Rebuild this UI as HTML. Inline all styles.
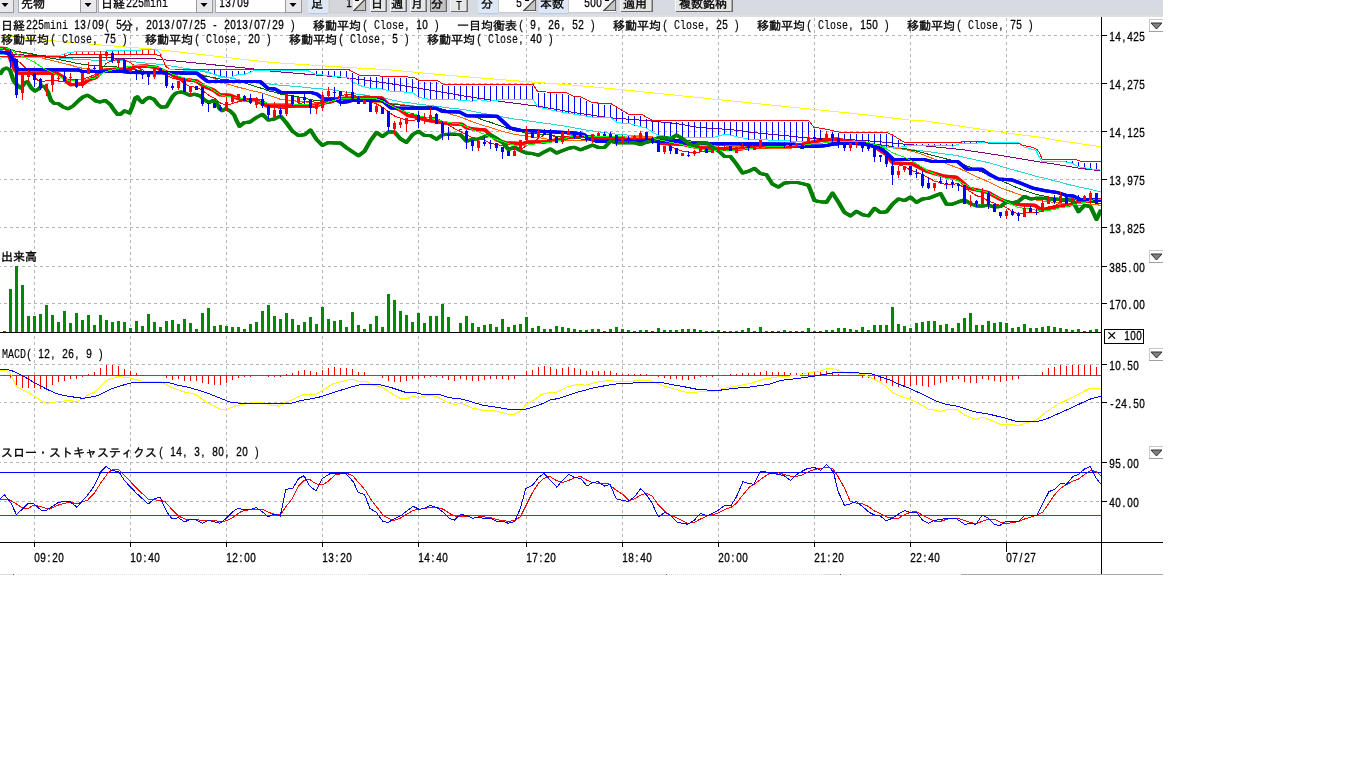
<!DOCTYPE html>
<html lang="ja"><head><meta charset="utf-8"><title>チャート</title>
<style>html,body{margin:0;padding:0;background:#fff;width:1366px;height:768px;overflow:hidden}
svg text{white-space:pre}</style></head>
<body>
<svg width="1366" height="768" viewBox="0 0 1366 768" shape-rendering="crispEdges" style="position:absolute;left:0;top:0;will-change:transform;transform:translateZ(0)">
<rect width="1366" height="768" fill="#fff"/>
<g stroke="#b4b4b4" stroke-width="1" stroke-dasharray="3 3" fill="none">
<line x1="34.5" y1="17" x2="34.5" y2="542" stroke-dashoffset="5"/>
<line x1="130.5" y1="17" x2="130.5" y2="542" stroke-dashoffset="5"/>
<line x1="226.5" y1="17" x2="226.5" y2="542" stroke-dashoffset="5"/>
<line x1="322.5" y1="17" x2="322.5" y2="542" stroke-dashoffset="5"/>
<line x1="418.5" y1="17" x2="418.5" y2="542" stroke-dashoffset="5"/>
<line x1="526.5" y1="17" x2="526.5" y2="542" stroke-dashoffset="5"/>
<line x1="622.5" y1="17" x2="622.5" y2="542" stroke-dashoffset="5"/>
<line x1="718.5" y1="17" x2="718.5" y2="542" stroke-dashoffset="5"/>
<line x1="814.5" y1="17" x2="814.5" y2="542" stroke-dashoffset="5"/>
<line x1="910.5" y1="17" x2="910.5" y2="542" stroke-dashoffset="5"/>
<line x1="1006.5" y1="17" x2="1006.5" y2="542" stroke-dashoffset="5"/>
<line x1="0" y1="35.5" x2="1101" y2="35.5" stroke-dashoffset="2"/>
<line x1="0" y1="83.5" x2="1101" y2="83.5" stroke-dashoffset="2"/>
<line x1="0" y1="131.5" x2="1101" y2="131.5" stroke-dashoffset="2"/>
<line x1="0" y1="179.5" x2="1101" y2="179.5" stroke-dashoffset="2"/>
<line x1="0" y1="227.5" x2="1101" y2="227.5" stroke-dashoffset="2"/>
<line x1="0" y1="266.5" x2="1101" y2="266.5" stroke-dashoffset="2"/>
<line x1="0" y1="303.5" x2="1101" y2="303.5" stroke-dashoffset="2"/>
<line x1="0" y1="364.5" x2="1101" y2="364.5" stroke-dashoffset="2"/>
<line x1="0" y1="402.5" x2="1101" y2="402.5" stroke-dashoffset="2"/>
<line x1="0" y1="462.5" x2="1101" y2="462.5" stroke-dashoffset="2"/>
<line x1="0" y1="501.5" x2="1101" y2="501.5" stroke-dashoffset="2"/>
</g>
<polyline points="0.0,54.1 4.5,54.1 10.5,54.1 16.5,54.9 22.5,55.3 28.5,55.6 34.5,56.0 40.5,56.7 46.5,57.2 52.5,57.6 58.5,58.0 64.5,58.4 70.5,58.8 76.5,59.4 82.5,59.7 88.5,59.9 94.5,60.2 100.5,60.1 106.5,60.0 112.5,60.1 118.5,60.4 124.5,61.0 130.5,61.5 136.5,62.1 142.5,62.7 148.5,63.4 154.5,63.9 160.5,64.4 166.5,65.3 172.5,66.3 178.5,67.1 184.5,68.2 190.5,69.1 196.5,70.1 202.5,71.5 208.5,72.9 214.5,74.4 220.5,75.9 226.5,77.3 232.5,78.4 238.5,79.6 244.5,81.0 250.5,82.0 256.5,82.1 262.5,82.9 268.5,83.9 274.5,84.6 280.5,85.3 286.5,85.6 292.5,86.3 298.5,86.8 304.5,87.2 310.5,88.0 316.5,88.5 322.5,89.0 328.5,89.6 334.5,90.2 340.5,91.3 346.5,92.3 352.5,93.3 358.5,94.4 364.5,95.0 370.5,96.1 376.5,96.9 382.5,97.9 388.5,99.1 394.5,100.5 400.5,101.8 406.5,102.6 412.5,103.2 418.5,104.2 424.5,104.8 430.5,105.6 436.5,106.4 442.5,107.1 448.5,107.9 454.5,108.6 460.5,109.1 466.5,110.1 472.5,111.4 478.5,112.6 484.5,113.6 490.5,114.6 496.5,115.9 502.5,117.0 508.5,118.0 514.5,119.1 520.5,119.7 526.5,120.6 532.5,121.5 538.5,122.3 544.5,123.2 550.5,123.9 556.5,124.9 562.5,125.8 568.5,126.8 574.5,127.9 580.5,128.9 586.5,130.1 592.5,131.0 598.5,131.7 604.5,132.6 610.5,133.3 616.5,134.2 622.5,134.8 628.5,135.1 634.5,135.5 640.5,135.8 646.5,136.3 652.5,137.1 658.5,137.8 664.5,138.5 670.5,139.4 676.5,140.2 682.5,140.7 688.5,141.2 694.5,141.6 700.5,142.0 706.5,142.3 712.5,142.4 718.5,142.5 724.5,142.6 730.5,142.8 736.5,142.8 742.5,142.6 748.5,142.4 754.5,142.3 760.5,142.3 766.5,142.7 772.5,142.9 778.5,143.2 784.5,143.5 790.5,143.7 796.5,143.6 802.5,144.1 808.5,144.2 814.5,144.3 820.5,144.4 826.5,144.2 832.5,144.3 838.5,144.6 844.5,144.9 850.5,145.0 856.5,145.0 862.5,145.3 868.5,145.5 874.5,146.0 880.5,146.6 886.5,147.2 892.5,148.0 898.5,148.5 904.5,149.0 910.5,149.6 916.5,150.1 922.5,150.9 928.5,151.7 934.5,152.5 940.5,153.4 946.5,154.2 952.5,155.0 958.5,156.0 964.5,157.4 970.5,158.7 976.5,160.1 982.5,161.3 988.5,162.7 994.5,164.3 1000.5,166.2 1006.5,167.9 1012.5,169.6 1018.5,171.3 1024.5,172.9 1030.5,174.6 1036.5,176.4 1042.5,177.7 1048.5,179.2 1054.5,180.8 1060.5,182.2 1066.5,184.0 1072.5,185.5 1078.5,186.9 1084.5,188.1 1090.5,189.3 1096.5,190.9 1102.5,192.3" fill="none" stroke="#2ad4d4" stroke-width="1" />
<polyline points="0.0,47.5 4.5,47.5 10.5,50.0 16.5,59.4 22.5,65.0 28.5,70.5 34.5,77.2 40.5,82.6 46.5,80.4 52.5,80.4 58.5,81.0 64.5,81.2 70.5,79.0 76.5,79.7 82.5,79.2 88.5,77.2 94.5,74.8 100.5,70.1 106.5,63.1 112.5,60.7 118.5,59.0 124.5,59.9 130.5,62.8 136.5,67.2 142.5,69.9 148.5,73.5 154.5,72.4 160.5,73.0 166.5,75.5 172.5,78.2 178.5,78.9 184.5,83.7 190.5,86.6 196.5,87.3 202.5,90.4 208.5,95.1 214.5,98.2 220.5,103.0 226.5,105.5 232.5,103.6 238.5,101.7 244.5,100.3 250.5,99.0 256.5,98.4 262.5,100.6 268.5,104.9 274.5,106.6 280.5,108.8 286.5,107.9 292.5,107.6 298.5,104.0 304.5,102.1 310.5,100.9 316.5,103.0 322.5,101.1 328.5,100.0 334.5,98.6 340.5,96.1 346.5,94.0 352.5,94.6 358.5,97.0 364.5,98.4 370.5,101.6 376.5,103.9 382.5,107.1 388.5,111.7 394.5,116.1 400.5,118.1 406.5,120.5 412.5,120.4 418.5,119.4 424.5,118.4 430.5,117.0 436.5,118.1 442.5,122.1 448.5,125.0 454.5,128.7 460.5,131.5 466.5,134.9 472.5,137.5 478.5,138.6 484.5,140.2 490.5,143.1 496.5,144.5 502.5,145.7 508.5,148.6 514.5,150.1 520.5,149.2 526.5,145.9 532.5,143.1 538.5,138.2 544.5,134.9 550.5,134.9 556.5,137.3 562.5,136.1 568.5,136.1 574.5,136.4 580.5,135.9 586.5,135.4 592.5,135.8 598.5,136.3 604.5,136.2 610.5,136.2 616.5,136.6 622.5,137.3 628.5,138.9 634.5,138.9 640.5,138.2 646.5,137.6 652.5,138.7 658.5,140.8 664.5,142.8 670.5,146.3 676.5,149.1 682.5,151.1 688.5,152.0 694.5,152.9 700.5,152.0 706.5,151.9 712.5,151.0 718.5,149.4 724.5,148.6 730.5,149.5 736.5,148.3 742.5,147.7 748.5,147.8 754.5,147.7 760.5,145.6 766.5,145.4 772.5,145.3 778.5,144.8 784.5,144.5 790.5,145.5 796.5,144.8 802.5,145.6 808.5,143.9 814.5,142.6 820.5,141.5 826.5,139.9 832.5,137.6 838.5,139.2 844.5,141.0 850.5,141.6 856.5,143.1 862.5,145.1 868.5,145.9 874.5,147.7 880.5,150.4 886.5,154.9 892.5,160.3 898.5,164.7 904.5,166.6 910.5,170.3 916.5,172.3 922.5,174.5 928.5,177.8 934.5,181.1 940.5,182.7 946.5,184.7 952.5,184.2 958.5,183.8 964.5,188.1 970.5,191.7 976.5,195.7 982.5,197.5 988.5,201.3 994.5,203.1 1000.5,206.0 1006.5,207.4 1012.5,211.9 1018.5,214.0 1024.5,213.2 1030.5,212.5 1036.5,212.9 1042.5,210.5 1048.5,207.0 1054.5,205.8 1060.5,202.5 1066.5,200.7 1072.5,199.7 1078.5,200.2 1084.5,198.9 1090.5,198.3 1096.5,198.4 1102.5,199.6" fill="none" stroke="#ff0000" stroke-width="1" />
<polyline points="0.0,48.7 4.5,48.7 10.5,49.3 16.5,51.5 22.5,52.8 28.5,54.1 34.5,55.6 40.5,57.6 46.5,59.3 52.5,60.6 58.5,62.0 64.5,63.6 70.5,65.0 76.5,67.0 82.5,68.2 88.5,69.2 94.5,70.2 100.5,70.4 106.5,70.7 112.5,71.3 118.5,71.9 124.5,73.3 130.5,73.6 136.5,72.6 142.5,72.6 148.5,72.7 154.5,72.1 160.5,71.2 166.5,71.4 172.5,72.0 178.5,72.1 184.5,72.7 190.5,73.1 196.5,73.3 202.5,74.8 208.5,76.6 214.5,78.6 220.5,81.4 226.5,83.9 232.5,85.5 238.5,87.3 244.5,88.7 250.5,90.4 256.5,91.7 262.5,93.2 268.5,95.1 274.5,97.2 280.5,99.4 286.5,99.8 292.5,100.6 298.5,101.4 304.5,101.8 310.5,102.9 316.5,103.7 322.5,103.2 328.5,102.6 334.5,101.9 340.5,101.2 346.5,100.8 352.5,101.0 358.5,101.5 364.5,101.4 370.5,101.9 376.5,102.2 382.5,102.6 388.5,103.2 394.5,103.8 400.5,104.2 406.5,105.4 412.5,105.8 418.5,107.0 424.5,107.9 430.5,108.2 436.5,109.1 442.5,111.0 448.5,113.3 454.5,115.4 460.5,117.1 466.5,119.4 472.5,121.8 478.5,123.7 484.5,125.8 490.5,127.4 496.5,129.5 502.5,131.4 508.5,132.9 514.5,134.3 520.5,135.2 526.5,135.9 532.5,137.1 538.5,137.6 544.5,138.5 550.5,139.7 556.5,140.7 562.5,140.6 568.5,140.4 574.5,140.4 580.5,140.8 586.5,140.8 592.5,140.2 598.5,139.8 604.5,139.4 610.5,139.1 616.5,138.8 622.5,138.1 628.5,137.4 634.5,136.6 640.5,136.3 646.5,136.7 652.5,137.0 658.5,138.0 664.5,138.6 670.5,139.2 676.5,139.7 682.5,140.7 688.5,142.0 694.5,142.7 700.5,143.2 706.5,143.8 712.5,144.5 718.5,145.3 724.5,145.8 730.5,146.5 736.5,146.7 742.5,147.1 748.5,147.5 754.5,148.0 760.5,148.4 766.5,148.7 772.5,148.8 778.5,148.5 784.5,148.4 790.5,148.2 796.5,147.6 802.5,147.4 808.5,146.5 814.5,145.8 820.5,145.5 826.5,144.6 832.5,144.1 838.5,143.9 844.5,143.9 850.5,143.6 856.5,143.3 862.5,143.4 868.5,143.4 874.5,143.9 880.5,144.8 886.5,145.7 892.5,147.2 898.5,148.4 904.5,149.5 910.5,150.9 916.5,152.5 922.5,154.4 928.5,156.9 934.5,159.1 940.5,161.2 946.5,163.7 952.5,166.0 958.5,168.1 964.5,170.9 970.5,173.8 976.5,176.9 982.5,179.1 988.5,181.9 994.5,184.7 1000.5,187.7 1006.5,190.0 1012.5,192.0 1018.5,194.2 1024.5,196.4 1030.5,198.2 1036.5,200.2 1042.5,201.0 1048.5,201.6 1054.5,202.5 1060.5,203.2 1066.5,204.2 1072.5,204.9 1078.5,205.6 1084.5,205.3 1090.5,204.8 1096.5,204.8 1102.5,205.4" fill="none" stroke="#ff6600" stroke-width="1" />
<polyline points="0.0,53.4 17.6,54.8 41.0,55.6 64.5,57.4 80.0,57.7 130.0,58.2 150.0,58.4 202.7,63.7 247.7,68.3 273.0,71.3 308.0,74.3 331.0,76.4 361.0,79.5 390.0,83.6 418.7,88.3 467.9,96.6 503.0,101.8 538.0,106.2 573.3,112.4 608.5,117.7 620.0,118.5 652.0,121.1 675.5,123.4 699.0,127.5 730.0,129.5 754.0,132.6 783.6,135.5 807.0,137.9 847.0,139.5 875.7,141.4 894.8,143.3 927.0,146.1 962.0,149.6 997.2,154.9 1032.4,160.8 1057.0,164.5 1080.3,168.4 1101.0,170.8" fill="none" stroke="#800080" stroke-width="1" />
<polyline points="0.0,35.5 25.8,38.4 55.7,41.0 80.0,43.3 130.0,47.3 150.0,48.8 220.3,56.7 270.0,62.4 290.6,63.7 343.3,67.2 390.0,69.9 450.3,75.5 526.0,81.6 573.3,85.1 620.0,89.5 824.3,110.5 866.0,114.8 909.0,120.0 920.0,120.3 1021.8,135.0 1040.0,137.1 1057.0,140.3 1101.0,146.7" fill="none" stroke="#ffff00" stroke-width="1" />
<polyline points="0.0,49.6 4.5,49.6 10.5,49.8 16.5,51.4 22.5,52.2 28.5,53.2 34.5,54.4 40.5,55.9 46.5,57.3 52.5,58.4 58.5,59.5 64.5,60.8 70.5,61.9 76.5,63.3 82.5,64.3 88.5,65.0 94.5,65.8 100.5,66.0 106.5,66.2 112.5,66.7 118.5,67.1 124.5,68.1 130.5,68.9 136.5,70.0 142.5,71.1 148.5,72.2 154.5,73.1 160.5,73.5 166.5,73.2 172.5,73.7 178.5,73.9 184.5,74.4 190.5,74.3 196.5,74.5 202.5,75.7 208.5,76.7 214.5,77.8 220.5,79.1 226.5,79.7 232.5,80.6 238.5,81.6 244.5,82.9 250.5,84.9 256.5,86.8 262.5,88.6 268.5,90.8 274.5,92.2 280.5,94.1 286.5,94.9 292.5,96.1 298.5,96.9 304.5,98.2 310.5,99.7 316.5,100.4 322.5,100.7 328.5,101.1 334.5,101.2 340.5,101.6 346.5,101.8 352.5,101.5 358.5,101.5 364.5,101.2 370.5,101.3 376.5,101.4 382.5,102.2 388.5,103.5 394.5,104.4 400.5,105.1 406.5,105.9 412.5,106.1 418.5,106.4 424.5,106.7 430.5,106.7 436.5,107.9 442.5,109.1 448.5,110.6 454.5,112.0 460.5,112.9 466.5,114.3 472.5,116.3 478.5,118.3 484.5,120.4 490.5,122.3 496.5,124.4 502.5,126.6 508.5,128.7 514.5,130.7 520.5,131.8 526.5,132.8 532.5,133.8 538.5,134.0 544.5,134.4 550.5,135.2 556.5,136.2 562.5,136.9 568.5,137.3 574.5,138.1 580.5,138.9 586.5,139.6 592.5,139.7 598.5,139.6 604.5,139.6 610.5,139.9 616.5,140.0 622.5,139.6 628.5,139.6 634.5,139.3 640.5,138.9 646.5,138.6 652.5,138.2 658.5,138.0 664.5,137.8 670.5,138.3 676.5,139.2 682.5,139.8 688.5,140.8 694.5,141.4 700.5,141.7 706.5,142.1 712.5,142.8 718.5,143.5 724.5,143.9 730.5,144.4 736.5,144.7 742.5,145.2 748.5,145.8 754.5,146.2 760.5,146.3 766.5,146.5 772.5,146.8 778.5,147.0 784.5,147.3 790.5,147.8 796.5,147.9 802.5,148.1 808.5,147.6 814.5,147.3 820.5,146.8 826.5,146.0 832.5,145.4 838.5,145.0 844.5,144.9 850.5,144.8 856.5,144.3 862.5,144.3 868.5,144.3 874.5,144.7 880.5,144.9 886.5,145.6 892.5,146.8 898.5,147.7 904.5,148.5 910.5,149.9 916.5,151.0 922.5,152.6 928.5,154.3 934.5,155.8 940.5,157.3 946.5,159.0 952.5,160.3 958.5,162.3 964.5,164.9 970.5,167.3 976.5,170.1 982.5,172.3 988.5,174.7 994.5,177.3 1000.5,180.2 1006.5,183.0 1012.5,185.7 1018.5,188.3 1024.5,190.4 1030.5,192.6 1036.5,194.6 1042.5,195.7 1048.5,196.8 1054.5,198.3 1060.5,199.1 1066.5,200.3 1072.5,200.8 1078.5,201.3 1084.5,201.8 1090.5,202.2 1096.5,203.0 1102.5,203.8" fill="none" stroke="#006400" stroke-width="1" />
<rect x="64" y="53.9" width="1" height="3.3" fill="#ff0000"/>
<rect x="70" y="52.3" width="1" height="2.7" fill="#ff0000"/>
<rect x="76" y="51.8" width="1" height="3.2" fill="#ff0000"/>
<rect x="82" y="51.4" width="1" height="3.6" fill="#ff0000"/>
<rect x="88" y="51.3" width="1" height="3.7" fill="#ff0000"/>
<rect x="94" y="51.2" width="1" height="3.8" fill="#ff0000"/>
<rect x="100" y="51.1" width="1" height="3.9" fill="#ff0000"/>
<rect x="106" y="51.0" width="1" height="4.0" fill="#ff0000"/>
<rect x="112" y="50.9" width="1" height="4.1" fill="#ff0000"/>
<rect x="118" y="50.8" width="1" height="4.2" fill="#ff0000"/>
<rect x="124" y="50.7" width="1" height="4.3" fill="#ff0000"/>
<rect x="130" y="50.6" width="1" height="4.4" fill="#ff0000"/>
<rect x="136" y="50.3" width="1" height="4.7" fill="#ff0000"/>
<rect x="142" y="49.9" width="1" height="5.1" fill="#ff0000"/>
<rect x="148" y="49.5" width="1" height="5.5" fill="#ff0000"/>
<rect x="154" y="49.5" width="1" height="5.6" fill="#ff0000"/>
<rect x="160" y="53.5" width="1" height="3.4" fill="#ff0000"/>
<rect x="208" y="70.4" width="1" height="2.1" fill="#0000ff"/>
<rect x="214" y="70.4" width="1" height="4.8" fill="#0000ff"/>
<rect x="220" y="70.4" width="1" height="7.0" fill="#0000ff"/>
<rect x="226" y="70.5" width="1" height="7.0" fill="#0000ff"/>
<rect x="232" y="70.5" width="1" height="6.8" fill="#0000ff"/>
<rect x="238" y="70.5" width="1" height="4.4" fill="#0000ff"/>
<rect x="244" y="70.5" width="1" height="4.4" fill="#0000ff"/>
<rect x="250" y="70.5" width="1" height="2.0" fill="#0000ff"/>
<rect x="310" y="70.7" width="1" height="1.7" fill="#0000ff"/>
<rect x="316" y="70.7" width="1" height="4.1" fill="#0000ff"/>
<rect x="322" y="70.7" width="1" height="4.8" fill="#0000ff"/>
<rect x="328" y="70.7" width="1" height="5.4" fill="#0000ff"/>
<rect x="334" y="70.8" width="1" height="6.0" fill="#0000ff"/>
<rect x="340" y="70.8" width="1" height="6.7" fill="#0000ff"/>
<rect x="346" y="70.8" width="1" height="7.3" fill="#0000ff"/>
<rect x="352" y="72.9" width="1" height="9.2" fill="#0000ff"/>
<rect x="358" y="76.1" width="1" height="9.4" fill="#0000ff"/>
<rect x="364" y="76.6" width="1" height="10.7" fill="#0000ff"/>
<rect x="370" y="76.9" width="1" height="11.9" fill="#0000ff"/>
<rect x="376" y="77.1" width="1" height="11.8" fill="#0000ff"/>
<rect x="382" y="77.4" width="1" height="12.2" fill="#0000ff"/>
<rect x="388" y="77.6" width="1" height="13.5" fill="#0000ff"/>
<rect x="394" y="77.8" width="1" height="14.0" fill="#0000ff"/>
<rect x="400" y="78.0" width="1" height="14.2" fill="#0000ff"/>
<rect x="406" y="78.3" width="1" height="14.5" fill="#0000ff"/>
<rect x="412" y="78.5" width="1" height="14.9" fill="#0000ff"/>
<rect x="418" y="81.4" width="1" height="16.4" fill="#0000ff"/>
<rect x="424" y="81.7" width="1" height="17.3" fill="#0000ff"/>
<rect x="430" y="81.8" width="1" height="18.2" fill="#0000ff"/>
<rect x="436" y="82.0" width="1" height="18.2" fill="#0000ff"/>
<rect x="442" y="85.1" width="1" height="15.2" fill="#0000ff"/>
<rect x="448" y="85.6" width="1" height="14.7" fill="#0000ff"/>
<rect x="454" y="85.6" width="1" height="14.8" fill="#0000ff"/>
<rect x="460" y="85.7" width="1" height="14.9" fill="#0000ff"/>
<rect x="466" y="85.7" width="1" height="15.3" fill="#0000ff"/>
<rect x="472" y="85.7" width="1" height="15.8" fill="#0000ff"/>
<rect x="478" y="85.7" width="1" height="14.4" fill="#0000ff"/>
<rect x="484" y="85.7" width="1" height="15.3" fill="#0000ff"/>
<rect x="490" y="85.8" width="1" height="15.8" fill="#0000ff"/>
<rect x="496" y="85.8" width="1" height="15.0" fill="#0000ff"/>
<rect x="502" y="85.8" width="1" height="14.2" fill="#0000ff"/>
<rect x="508" y="85.8" width="1" height="14.1" fill="#0000ff"/>
<rect x="514" y="85.8" width="1" height="14.1" fill="#0000ff"/>
<rect x="520" y="85.9" width="1" height="14.0" fill="#0000ff"/>
<rect x="526" y="85.9" width="1" height="14.0" fill="#0000ff"/>
<rect x="532" y="85.9" width="1" height="14.0" fill="#0000ff"/>
<rect x="538" y="93.1" width="1" height="14.5" fill="#0000ff"/>
<rect x="544" y="93.3" width="1" height="15.7" fill="#0000ff"/>
<rect x="550" y="93.4" width="1" height="16.9" fill="#0000ff"/>
<rect x="556" y="93.6" width="1" height="18.1" fill="#0000ff"/>
<rect x="562" y="93.7" width="1" height="19.0" fill="#0000ff"/>
<rect x="568" y="94.9" width="1" height="18.9" fill="#0000ff"/>
<rect x="574" y="97.4" width="1" height="17.4" fill="#0000ff"/>
<rect x="580" y="98.0" width="1" height="17.8" fill="#0000ff"/>
<rect x="586" y="101.0" width="1" height="15.7" fill="#0000ff"/>
<rect x="592" y="104.1" width="1" height="13.4" fill="#0000ff"/>
<rect x="598" y="104.3" width="1" height="13.3" fill="#0000ff"/>
<rect x="604" y="104.5" width="1" height="13.2" fill="#0000ff"/>
<rect x="610" y="104.7" width="1" height="13.4" fill="#0000ff"/>
<rect x="616" y="108.3" width="1" height="14.1" fill="#0000ff"/>
<rect x="622" y="111.9" width="1" height="11.9" fill="#0000ff"/>
<rect x="628" y="115.5" width="1" height="8.4" fill="#0000ff"/>
<rect x="634" y="115.9" width="1" height="9.6" fill="#0000ff"/>
<rect x="640" y="116.2" width="1" height="10.9" fill="#0000ff"/>
<rect x="646" y="118.5" width="1" height="10.3" fill="#0000ff"/>
<rect x="652" y="121.6" width="1" height="10.9" fill="#0000ff"/>
<rect x="658" y="121.6" width="1" height="14.2" fill="#0000ff"/>
<rect x="664" y="121.6" width="1" height="15.0" fill="#0000ff"/>
<rect x="670" y="121.6" width="1" height="15.8" fill="#0000ff"/>
<rect x="676" y="121.6" width="1" height="16.4" fill="#0000ff"/>
<rect x="682" y="121.6" width="1" height="16.4" fill="#0000ff"/>
<rect x="688" y="121.6" width="1" height="16.4" fill="#0000ff"/>
<rect x="694" y="121.6" width="1" height="16.4" fill="#0000ff"/>
<rect x="700" y="121.6" width="1" height="16.4" fill="#0000ff"/>
<rect x="706" y="121.6" width="1" height="16.4" fill="#0000ff"/>
<rect x="712" y="121.6" width="1" height="16.4" fill="#0000ff"/>
<rect x="718" y="121.6" width="1" height="14.9" fill="#0000ff"/>
<rect x="724" y="121.6" width="1" height="13.6" fill="#0000ff"/>
<rect x="730" y="121.5" width="1" height="14.1" fill="#0000ff"/>
<rect x="736" y="121.5" width="1" height="15.6" fill="#0000ff"/>
<rect x="742" y="121.5" width="1" height="16.8" fill="#0000ff"/>
<rect x="748" y="121.5" width="1" height="18.0" fill="#0000ff"/>
<rect x="754" y="121.5" width="1" height="18.3" fill="#0000ff"/>
<rect x="760" y="121.5" width="1" height="18.6" fill="#0000ff"/>
<rect x="766" y="121.5" width="1" height="18.9" fill="#0000ff"/>
<rect x="772" y="121.5" width="1" height="19.2" fill="#0000ff"/>
<rect x="778" y="121.5" width="1" height="19.5" fill="#0000ff"/>
<rect x="784" y="121.5" width="1" height="19.7" fill="#0000ff"/>
<rect x="790" y="121.5" width="1" height="20.0" fill="#0000ff"/>
<rect x="796" y="121.5" width="1" height="20.1" fill="#0000ff"/>
<rect x="802" y="121.5" width="1" height="20.3" fill="#0000ff"/>
<rect x="808" y="121.5" width="1" height="20.4" fill="#0000ff"/>
<rect x="814" y="128.5" width="1" height="13.6" fill="#0000ff"/>
<rect x="820" y="129.5" width="1" height="12.7" fill="#0000ff"/>
<rect x="826" y="130.5" width="1" height="11.8" fill="#0000ff"/>
<rect x="832" y="131.9" width="1" height="10.9" fill="#0000ff"/>
<rect x="838" y="133.3" width="1" height="9.9" fill="#0000ff"/>
<rect x="844" y="134.2" width="1" height="9.4" fill="#0000ff"/>
<rect x="850" y="134.2" width="1" height="9.9" fill="#0000ff"/>
<rect x="856" y="134.2" width="1" height="10.5" fill="#0000ff"/>
<rect x="862" y="134.2" width="1" height="11.1" fill="#0000ff"/>
<rect x="868" y="134.3" width="1" height="11.7" fill="#0000ff"/>
<rect x="874" y="134.3" width="1" height="12.3" fill="#0000ff"/>
<rect x="880" y="134.3" width="1" height="12.9" fill="#0000ff"/>
<rect x="886" y="134.3" width="1" height="13.4" fill="#0000ff"/>
<rect x="892" y="136.3" width="1" height="11.7" fill="#0000ff"/>
<rect x="898" y="140.0" width="1" height="7.7" fill="#0000ff"/>
<rect x="904" y="143.7" width="1" height="3.4" fill="#0000ff"/>
<rect x="910" y="143.7" width="1" height="2.0" fill="#0000ff"/>
<rect x="916" y="143.7" width="1" height="2.0" fill="#0000ff"/>
<rect x="922" y="143.7" width="1" height="2.1" fill="#0000ff"/>
<rect x="928" y="143.7" width="1" height="2.1" fill="#0000ff"/>
<rect x="934" y="143.7" width="1" height="2.2" fill="#0000ff"/>
<rect x="940" y="143.7" width="1" height="2.2" fill="#0000ff"/>
<rect x="946" y="143.7" width="1" height="2.3" fill="#0000ff"/>
<rect x="952" y="143.7" width="1" height="2.8" fill="#0000ff"/>
<rect x="964" y="142.4" width="1" height="1.3" fill="#0000ff"/>
<rect x="970" y="142.4" width="1" height="1.3" fill="#0000ff"/>
<rect x="976" y="142.4" width="1" height="1.3" fill="#0000ff"/>
<rect x="1036" y="150.7" width="1" height="1.4" fill="#0000ff"/>
<rect x="1066" y="160.8" width="1" height="1.7" fill="#0000ff"/>
<rect x="1072" y="160.9" width="1" height="3.0" fill="#0000ff"/>
<rect x="1078" y="161.8" width="1" height="5.5" fill="#0000ff"/>
<rect x="1084" y="162.7" width="1" height="5.5" fill="#0000ff"/>
<rect x="1090" y="162.8" width="1" height="6.4" fill="#0000ff"/>
<rect x="1096" y="162.9" width="1" height="7.2" fill="#0000ff"/>
<polyline points="0.0,58.3 3.0,57.4 41.0,57.4 48.7,55.6 61.5,55.0 66.0,53.3 69.2,52.4 82.0,51.4 131.8,50.6 153.7,49.2 158.0,51.0 161.0,54.0 165.4,65.3 169.0,68.6 172.0,69.8 200.0,70.3 207.0,71.3 214.0,74.5 220.6,77.0 232.0,77.0 238.0,74.4 244.6,74.4 253.7,70.8 308.0,70.8 316.0,74.3 348.6,77.8 352.0,81.3 359.0,85.3 369.7,88.3 380.0,88.5 390.0,91.0 406.4,92.2 413.4,93.0 418.7,97.5 431.0,99.6 464.4,100.1 471.4,101.3 478.4,99.6 489.0,101.3 503.0,99.4 533.0,99.4 538.0,107.0 555.7,111.0 573.3,114.1 591.0,117.0 610.2,117.3 617.0,122.3 622.8,123.4 628.6,123.4 646.2,128.1 652.0,131.7 658.0,135.2 675.5,137.5 713.0,137.5 723.6,134.6 730.0,135.0 736.7,136.7 748.4,139.0 772.0,140.2 790.0,141.0 828.0,141.9 847.0,143.3 866.0,145.2 885.0,147.1 894.8,147.6 904.3,146.7 910.0,145.2 950.3,145.5 952.7,146.1 962.0,143.2 977.3,143.2 980.8,142.3 1018.3,142.3 1024.0,147.0 1035.8,150.2 1041.6,161.4 1062.8,161.4 1072.0,163.1 1078.0,166.7 1092.0,169.0 1101.0,170.2" fill="none" stroke="#00ffff" stroke-width="1" />
<polyline points="0.0,56.5 64.5,56.7 65.7,55.8 69.2,54.5 80.0,54.5 153.7,54.5 159.6,55.3 162.3,58.5 165.8,66.4 169.3,69.0 348.6,69.5 359.0,75.1 380.0,76.0 413.4,77.2 418.7,80.2 438.0,80.8 443.3,84.3 533.0,84.6 538.0,91.8 566.3,92.5 573.3,96.0 580.4,96.6 592.7,102.9 610.4,103.3 628.6,114.3 642.7,115.0 652.0,120.3 808.6,120.2 813.8,127.1 828.0,129.5 842.4,132.9 888.0,133.0 892.9,135.2 904.3,142.4 961.0,142.4 962.0,141.1 983.0,141.1 988.0,143.0 1018.3,143.0 1023.0,145.5 1032.4,147.3 1037.0,149.6 1039.3,152.6 1042.2,159.4 1075.6,159.6 1081.5,161.4 1101.0,161.7" fill="none" stroke="#ff0000" stroke-width="1" />
<polyline points="-0.7,48.3 5.3,48.5 7.8,52.0 9.8,59.0 12.8,67.0 15.3,71.5 18.3,73.3 56.3,73.3 63.8,78.0 66.0,81.7 70.1,84.8 82.3,83.8 88.9,79.6 95.1,77.5 99.3,73.3 103.3,70.2 113.9,69.2 124.3,69.7 130.3,68.6 134.3,66.6 144.9,66.0 156.3,67.6 160.6,70.2 163.7,71.2 171.0,74.4 177.3,78.5 196.0,81.0 202.3,85.8 212.6,90.0 218.9,94.7 229.3,95.2 233.5,96.8 239.7,99.4 254.3,100.4 259.3,102.5 266.3,106.0 315.3,106.0 322.6,103.0 329.3,102.0 339.0,98.4 353.1,97.9 364.8,97.3 381.3,97.9 387.1,104.3 400.0,110.2 407.0,115.4 414.3,116.7 426.0,120.2 437.7,121.9 449.3,123.7 461.3,124.3 465.9,127.8 472.9,129.0 484.6,130.1 489.3,134.8 496.3,140.1 505.7,143.0 522.2,143.6 526.8,141.9 543.3,141.9 555.0,140.1 566.7,137.8 574.3,136.8 583.3,136.3 592.7,137.5 616.3,138.1 651.3,139.3 660.7,143.4 674.8,144.0 683.3,144.5 689.3,146.0 697.3,147.5 724.3,148.7 736.0,149.4 747.7,147.8 759.3,146.7 794.3,146.0 806.3,143.1 818.1,140.8 829.8,139.6 836.8,139.0 846.3,141.4 865.0,143.7 874.3,146.7 879.3,150.2 885.3,154.3 892.3,163.1 910.9,163.7 926.3,171.3 942.6,176.0 955.5,177.2 961.3,181.9 968.3,188.3 987.2,192.4 997.7,198.3 1005.9,201.8 1020.0,204.8 1034.0,205.3 1040.9,210.0 1048.0,208.3 1056.3,206.5 1067.9,205.3 1074.9,202.4 1091.3,200.6 1100.3,199.5" fill="none" stroke="#ff0000" stroke-width="3" stroke-linejoin="round" shape-rendering="geometricPrecision"/>
<polyline points="0.7,48.3 6.7,48.5 9.2,52.0 11.2,59.0 14.2,67.0 16.7,71.5 19.7,73.3 57.7,73.3 65.2,78.0 67.4,81.7 71.5,84.8 83.7,83.8 90.3,79.6 96.5,77.5 100.7,73.3 104.7,70.2 115.3,69.2 125.7,69.7 131.7,68.6 135.7,66.6 146.3,66.0 157.7,67.6 161.9,70.2 165.1,71.2 172.4,74.4 178.7,78.5 197.4,81.0 203.7,85.8 214.0,90.0 220.3,94.7 230.7,95.2 234.9,96.8 241.1,99.4 255.7,100.4 260.7,102.5 267.7,106.0 316.7,106.0 324.0,103.0 330.7,102.0 340.4,98.4 354.5,97.9 366.2,97.3 382.7,97.9 388.5,104.3 401.4,110.2 408.4,115.4 415.7,116.7 427.4,120.2 439.1,121.9 450.7,123.7 462.7,124.3 467.3,127.8 474.3,129.0 486.0,130.1 490.7,134.8 497.7,140.1 507.1,143.0 523.6,143.6 528.2,141.9 544.7,141.9 556.4,140.1 568.1,137.8 575.7,136.8 584.7,136.3 594.1,137.5 617.7,138.1 652.7,139.3 662.1,143.4 676.2,144.0 684.7,144.5 690.7,146.0 698.7,147.5 725.7,148.7 737.4,149.4 749.1,147.8 760.7,146.7 795.7,146.0 807.7,143.1 819.5,140.8 831.2,139.6 838.2,139.0 847.7,141.4 866.4,143.7 875.7,146.7 880.7,150.2 886.7,154.3 893.7,163.1 912.3,163.7 927.7,171.3 944.0,176.0 956.9,177.2 962.7,181.9 969.7,188.3 988.6,192.4 999.1,198.3 1007.3,201.8 1021.4,204.8 1035.5,205.3 1042.3,210.0 1049.4,208.3 1057.7,206.5 1069.3,205.3 1076.3,202.4 1092.7,200.6 1101.7,199.5" fill="none" stroke="#ff0000" stroke-width="3" stroke-linejoin="round" shape-rendering="geometricPrecision"/>
<polyline points="0.0,48.3 6.0,48.5 8.5,52.0 10.5,59.0 13.5,67.0 16.0,71.5 19.0,73.3 57.0,73.3 64.5,78.0 66.7,81.7 70.8,84.8 83.0,83.8 89.6,79.6 95.8,77.5 100.0,73.3 104.0,70.2 114.6,69.2 125.0,69.7 131.0,68.6 135.0,66.6 145.6,66.0 157.0,67.6 161.2,70.2 164.4,71.2 171.7,74.4 178.0,78.5 196.7,81.0 203.0,85.8 213.3,90.0 219.6,94.7 230.0,95.2 234.2,96.8 240.4,99.4 255.0,100.4 260.0,102.5 267.0,106.0 316.0,106.0 323.3,103.0 330.0,102.0 339.7,98.4 353.8,97.9 365.5,97.3 382.0,97.9 387.8,104.3 400.7,110.2 407.7,115.4 415.0,116.7 426.7,120.2 438.4,121.9 450.0,123.7 462.0,124.3 466.6,127.8 473.6,129.0 485.3,130.1 490.0,134.8 497.0,140.1 506.4,143.0 522.9,143.6 527.5,141.9 544.0,141.9 555.7,140.1 567.4,137.8 575.0,136.8 584.0,136.3 593.4,137.5 617.0,138.1 652.0,139.3 661.4,143.4 675.5,144.0 684.0,144.5 690.0,146.0 698.0,147.5 725.0,148.7 736.7,149.4 748.4,147.8 760.0,146.7 795.0,146.0 807.0,143.1 818.8,140.8 830.5,139.6 837.5,139.0 847.0,141.4 865.7,143.7 875.0,146.7 880.0,150.2 886.0,154.3 893.0,163.1 911.6,163.7 927.0,171.3 943.3,176.0 956.2,177.2 962.0,181.9 969.0,188.3 987.9,192.4 998.4,198.3 1006.6,201.8 1020.7,204.8 1034.8,205.3 1041.6,210.0 1048.7,208.3 1057.0,206.5 1068.6,205.3 1075.6,202.4 1092.0,200.6 1101.0,199.5" fill="none" stroke="#ff0000" stroke-width="3" stroke-linejoin="round" shape-rendering="geometricPrecision"/>
<polyline points="-0.7,52.0 8.1,53.2 11.0,57.4 14.5,62.6 16.3,69.5 78.3,70.0 81.3,71.5 124.3,71.5 129.3,72.5 196.0,73.0 206.3,81.2 259.3,81.5 262.3,84.0 267.3,88.5 274.3,89.0 280.3,92.6 310.9,92.6 316.7,94.3 322.6,99.0 334.3,99.0 340.3,102.5 348.3,101.4 353.1,99.8 381.3,100.2 384.7,103.0 390.6,108.0 435.3,108.2 442.3,111.6 458.8,112.0 465.9,115.8 496.3,116.2 509.3,128.0 519.8,130.2 574.3,133.0 583.3,134.6 588.1,138.7 596.3,141.4 679.3,140.8 686.3,143.5 794.3,144.2 801.3,146.4 821.3,146.0 827.3,145.2 836.8,142.5 842.7,143.1 862.3,143.7 872.0,146.0 879.3,148.0 885.3,152.6 892.3,159.4 922.7,159.4 930.9,161.4 956.7,161.4 966.0,169.0 981.3,169.2 989.5,174.9 997.7,179.0 1011.8,180.1 1021.0,183.7 1032.7,188.3 1044.5,190.7 1056.3,192.4 1065.6,195.4 1072.6,196.0 1079.6,199.5 1089.0,199.5 1100.3,200.6" fill="none" stroke="#0000ff" stroke-width="3" stroke-linejoin="round" shape-rendering="geometricPrecision"/>
<polyline points="0.7,52.0 9.5,53.2 12.4,57.4 15.9,62.6 17.7,69.5 79.7,70.0 82.7,71.5 125.7,71.5 130.7,72.5 197.4,73.0 207.7,81.2 260.7,81.5 263.7,84.0 268.7,88.5 275.7,89.0 281.7,92.6 312.3,92.6 318.1,94.3 324.0,99.0 335.7,99.0 341.7,102.5 349.7,101.4 354.5,99.8 382.7,100.2 386.1,103.0 392.0,108.0 436.7,108.2 443.7,111.6 460.2,112.0 467.3,115.8 497.7,116.2 510.7,128.0 521.2,130.2 575.7,133.0 584.7,134.6 589.5,138.7 597.7,141.4 680.7,140.8 687.7,143.5 795.7,144.2 802.7,146.4 822.7,146.0 828.7,145.2 838.2,142.5 844.1,143.1 863.7,143.7 873.4,146.0 880.7,148.0 886.7,152.6 893.7,159.4 924.1,159.4 932.3,161.4 958.1,161.4 967.5,169.0 982.7,169.2 990.9,174.9 999.1,179.0 1013.2,180.1 1022.4,183.7 1034.1,188.3 1045.9,190.7 1057.7,192.4 1067.0,195.4 1074.0,196.0 1081.0,199.5 1090.4,199.5 1101.7,200.6" fill="none" stroke="#0000ff" stroke-width="3" stroke-linejoin="round" shape-rendering="geometricPrecision"/>
<polyline points="0.0,52.0 8.8,53.2 11.7,57.4 15.2,62.6 17.0,69.5 79.0,70.0 82.0,71.5 125.0,71.5 130.0,72.5 196.7,73.0 207.0,81.2 260.0,81.5 263.0,84.0 268.0,88.5 275.0,89.0 281.0,92.6 311.6,92.6 317.4,94.3 323.3,99.0 335.0,99.0 341.0,102.5 349.0,101.4 353.8,99.8 382.0,100.2 385.4,103.0 391.3,108.0 436.0,108.2 443.0,111.6 459.5,112.0 466.6,115.8 497.0,116.2 510.0,128.0 520.5,130.2 575.0,133.0 584.0,134.6 588.8,138.7 597.0,141.4 680.0,140.8 687.0,143.5 795.0,144.2 802.0,146.4 822.0,146.0 828.0,145.2 837.5,142.5 843.4,143.1 863.0,143.7 872.7,146.0 880.0,148.0 886.0,152.6 893.0,159.4 923.4,159.4 931.6,161.4 957.4,161.4 966.8,169.0 982.0,169.2 990.2,174.9 998.4,179.0 1012.5,180.1 1021.7,183.7 1033.4,188.3 1045.2,190.7 1057.0,192.4 1066.3,195.4 1073.3,196.0 1080.3,199.5 1089.7,199.5 1101.0,200.6" fill="none" stroke="#0000ff" stroke-width="3" stroke-linejoin="round" shape-rendering="geometricPrecision"/>
<polyline points="-0.7,74.4 2.3,69.7 5.6,68.0 9.3,70.0 12.8,80.6 16.0,84.8 20.1,88.0 24.3,82.7 26.9,81.7 30.6,88.0 34.3,91.0 37.8,89.0 41.0,85.8 44.1,86.9 47.3,92.0 50.3,100.4 53.5,103.5 57.6,103.5 62.8,107.2 67.5,108.8 72.3,106.0 78.5,100.0 82.6,96.8 86.8,95.2 91.0,97.8 95.1,101.0 99.3,102.0 104.5,100.4 109.7,104.6 113.9,110.8 117.0,114.5 120.1,114.0 123.8,110.8 129.0,113.0 131.6,106.7 134.7,97.8 136.8,96.8 138.7,99.9 141.8,102.5 144.9,99.4 148.6,97.3 153.3,99.4 157.3,104.6 160.6,107.2 165.8,106.7 168.9,101.5 172.0,96.2 175.1,93.1 180.3,92.0 184.5,93.1 188.7,95.2 193.9,94.2 199.1,95.7 204.3,100.4 208.5,102.5 212.6,100.4 215.8,102.5 218.9,108.8 221.5,110.8 225.1,108.8 229.3,110.8 233.5,115.0 235.6,120.0 238.8,126.3 243.3,122.8 249.3,121.9 255.3,117.8 261.8,114.3 267.8,120.1 273.8,119.0 279.8,116.0 285.8,123.0 291.8,131.3 297.8,135.4 303.8,134.8 309.8,130.0 315.8,139.5 321.8,145.3 327.8,142.4 333.8,143.0 339.8,143.0 345.8,147.7 351.8,151.8 357.8,155.7 363.8,151.2 369.8,140.6 375.8,132.4 381.8,136.5 387.8,131.9 393.8,131.9 399.8,138.9 405.8,142.4 411.8,134.8 417.8,131.3 423.8,135.4 429.8,135.6 435.8,139.2 441.8,134.8 447.8,134.2 453.8,134.2 459.8,134.8 465.8,141.3 471.8,139.2 477.8,138.9 483.8,136.6 489.8,134.8 495.8,138.3 501.8,142.4 507.8,149.5 513.8,147.1 519.8,150.6 525.8,153.0 531.8,153.6 537.8,155.3 543.8,151.8 549.8,148.9 555.8,153.0 561.8,150.6 567.8,148.3 573.8,147.3 579.8,149.8 585.8,147.5 591.8,145.1 597.8,147.5 603.8,147.5 609.8,141.0 615.8,142.8 621.8,142.8 627.8,142.8 633.8,142.8 639.8,144.5 645.8,142.2 651.8,141.0 657.8,137.5 663.8,137.5 669.8,138.7 675.8,135.0 681.8,138.7 687.8,143.4 693.8,146.3 699.8,142.8 705.8,142.8 711.8,146.9 717.8,151.0 723.8,156.3 729.8,156.5 735.8,164.2 741.8,173.0 747.8,171.3 753.8,168.3 759.8,173.6 765.8,174.8 771.8,184.2 777.8,187.1 783.8,183.0 789.8,182.4 795.8,182.4 801.8,183.6 807.8,185.3 813.8,200.6 819.8,201.8 825.8,202.3 831.8,193.0 837.8,202.3 843.8,212.4 849.8,215.9 855.8,211.2 861.8,214.7 867.8,215.9 873.8,208.3 879.8,212.4 885.8,211.8 891.8,204.2 897.8,198.9 903.8,200.6 909.8,197.1 915.8,202.4 921.8,198.9 927.8,198.3 933.8,196.0 939.8,193.6 945.8,204.2 951.8,204.2 957.8,201.8 963.8,200.0 969.8,203.6 975.8,205.9 981.8,205.9 987.8,205.3 993.8,207.1 999.8,206.5 1005.8,201.8 1011.8,203.0 1017.8,201.2 1023.8,196.5 1029.8,198.9 1035.8,198.3 1041.8,198.3 1047.8,198.9 1053.8,198.9 1059.8,199.5 1065.8,199.5 1071.8,200.6 1077.8,211.8 1083.8,205.3 1089.8,206.7 1095.8,219.4 1100.3,210.0" fill="none" stroke="#008000" stroke-width="3" stroke-linejoin="round" shape-rendering="geometricPrecision"/>
<polyline points="0.7,74.4 3.7,69.7 7.0,68.0 10.7,70.0 14.2,80.6 17.4,84.8 21.5,88.0 25.7,82.7 28.3,81.7 32.0,88.0 35.7,91.0 39.2,89.0 42.4,85.8 45.5,86.9 48.7,92.0 51.7,100.4 54.9,103.5 59.0,103.5 64.2,107.2 68.9,108.8 73.7,106.0 79.9,100.0 84.0,96.8 88.2,95.2 92.4,97.8 96.5,101.0 100.7,102.0 105.9,100.4 111.1,104.6 115.3,110.8 118.4,114.5 121.5,114.0 125.2,110.8 130.4,113.0 133.0,106.7 136.1,97.8 138.2,96.8 140.1,99.9 143.2,102.5 146.3,99.4 150.0,97.3 154.7,99.4 158.7,104.6 161.9,107.2 167.2,106.7 170.3,101.5 173.4,96.2 176.5,93.1 181.7,92.0 185.9,93.1 190.1,95.2 195.3,94.2 200.5,95.7 205.7,100.4 209.9,102.5 214.0,100.4 217.2,102.5 220.3,108.8 222.9,110.8 226.5,108.8 230.7,110.8 234.9,115.0 236.9,120.0 240.2,126.3 244.7,122.8 250.7,121.9 256.7,117.8 263.2,114.3 269.2,120.1 275.2,119.0 281.2,116.0 287.2,123.0 293.2,131.3 299.2,135.4 305.2,134.8 311.2,130.0 317.2,139.5 323.2,145.3 329.2,142.4 335.2,143.0 341.2,143.0 347.2,147.7 353.2,151.8 359.2,155.7 365.2,151.2 371.2,140.6 377.2,132.4 383.2,136.5 389.2,131.9 395.2,131.9 401.2,138.9 407.2,142.4 413.2,134.8 419.2,131.3 425.2,135.4 431.2,135.6 437.2,139.2 443.2,134.8 449.2,134.2 455.2,134.2 461.2,134.8 467.2,141.3 473.2,139.2 479.2,138.9 485.2,136.6 491.2,134.8 497.2,138.3 503.2,142.4 509.2,149.5 515.2,147.1 521.2,150.6 527.2,153.0 533.2,153.6 539.2,155.3 545.2,151.8 551.2,148.9 557.2,153.0 563.2,150.6 569.2,148.3 575.2,147.3 581.2,149.8 587.2,147.5 593.2,145.1 599.2,147.5 605.2,147.5 611.2,141.0 617.2,142.8 623.2,142.8 629.2,142.8 635.2,142.8 641.2,144.5 647.2,142.2 653.2,141.0 659.2,137.5 665.2,137.5 671.2,138.7 677.2,135.0 683.2,138.7 689.2,143.4 695.2,146.3 701.2,142.8 707.2,142.8 713.2,146.9 719.2,151.0 725.2,156.3 731.2,156.5 737.2,164.2 743.2,173.0 749.2,171.3 755.2,168.3 761.2,173.6 767.2,174.8 773.2,184.2 779.2,187.1 785.2,183.0 791.2,182.4 797.2,182.4 803.2,183.6 809.2,185.3 815.2,200.6 821.2,201.8 827.2,202.3 833.2,193.0 839.2,202.3 845.2,212.4 851.2,215.9 857.2,211.2 863.2,214.7 869.2,215.9 875.2,208.3 881.2,212.4 887.2,211.8 893.2,204.2 899.2,198.9 905.2,200.6 911.2,197.1 917.2,202.4 923.2,198.9 929.2,198.3 935.2,196.0 941.2,193.6 947.2,204.2 953.2,204.2 959.2,201.8 965.2,200.0 971.2,203.6 977.2,205.9 983.2,205.9 989.2,205.3 995.2,207.1 1001.2,206.5 1007.2,201.8 1013.2,203.0 1019.2,201.2 1025.2,196.5 1031.2,198.9 1037.2,198.3 1043.2,198.3 1049.2,198.9 1055.2,198.9 1061.2,199.5 1067.2,199.5 1073.2,200.6 1079.2,211.8 1085.2,205.3 1091.2,206.7 1097.2,219.4 1101.7,210.0" fill="none" stroke="#008000" stroke-width="3" stroke-linejoin="round" shape-rendering="geometricPrecision"/>
<polyline points="0.0,74.4 3.0,69.7 6.3,68.0 10.0,70.0 13.5,80.6 16.7,84.8 20.8,88.0 25.0,82.7 27.6,81.7 31.3,88.0 35.0,91.0 38.5,89.0 41.7,85.8 44.8,86.9 48.0,92.0 51.0,100.4 54.2,103.5 58.3,103.5 63.5,107.2 68.2,108.8 73.0,106.0 79.2,100.0 83.3,96.8 87.5,95.2 91.7,97.8 95.8,101.0 100.0,102.0 105.2,100.4 110.4,104.6 114.6,110.8 117.7,114.5 120.8,114.0 124.5,110.8 129.7,113.0 132.3,106.7 135.4,97.8 137.5,96.8 139.4,99.9 142.5,102.5 145.6,99.4 149.3,97.3 154.0,99.4 158.0,104.6 161.2,107.2 166.5,106.7 169.6,101.5 172.7,96.2 175.8,93.1 181.0,92.0 185.2,93.1 189.4,95.2 194.6,94.2 199.8,95.7 205.0,100.4 209.2,102.5 213.3,100.4 216.5,102.5 219.6,108.8 222.2,110.8 225.8,108.8 230.0,110.8 234.2,115.0 236.2,120.0 239.5,126.3 244.0,122.8 250.0,121.9 256.0,117.8 262.5,114.3 268.5,120.1 274.5,119.0 280.5,116.0 286.5,123.0 292.5,131.3 298.5,135.4 304.5,134.8 310.5,130.0 316.5,139.5 322.5,145.3 328.5,142.4 334.5,143.0 340.5,143.0 346.5,147.7 352.5,151.8 358.5,155.7 364.5,151.2 370.5,140.6 376.5,132.4 382.5,136.5 388.5,131.9 394.5,131.9 400.5,138.9 406.5,142.4 412.5,134.8 418.5,131.3 424.5,135.4 430.5,135.6 436.5,139.2 442.5,134.8 448.5,134.2 454.5,134.2 460.5,134.8 466.5,141.3 472.5,139.2 478.5,138.9 484.5,136.6 490.5,134.8 496.5,138.3 502.5,142.4 508.5,149.5 514.5,147.1 520.5,150.6 526.5,153.0 532.5,153.6 538.5,155.3 544.5,151.8 550.5,148.9 556.5,153.0 562.5,150.6 568.5,148.3 574.5,147.3 580.5,149.8 586.5,147.5 592.5,145.1 598.5,147.5 604.5,147.5 610.5,141.0 616.5,142.8 622.5,142.8 628.5,142.8 634.5,142.8 640.5,144.5 646.5,142.2 652.5,141.0 658.5,137.5 664.5,137.5 670.5,138.7 676.5,135.0 682.5,138.7 688.5,143.4 694.5,146.3 700.5,142.8 706.5,142.8 712.5,146.9 718.5,151.0 724.5,156.3 730.5,156.5 736.5,164.2 742.5,173.0 748.5,171.3 754.5,168.3 760.5,173.6 766.5,174.8 772.5,184.2 778.5,187.1 784.5,183.0 790.5,182.4 796.5,182.4 802.5,183.6 808.5,185.3 814.5,200.6 820.5,201.8 826.5,202.3 832.5,193.0 838.5,202.3 844.5,212.4 850.5,215.9 856.5,211.2 862.5,214.7 868.5,215.9 874.5,208.3 880.5,212.4 886.5,211.8 892.5,204.2 898.5,198.9 904.5,200.6 910.5,197.1 916.5,202.4 922.5,198.9 928.5,198.3 934.5,196.0 940.5,193.6 946.5,204.2 952.5,204.2 958.5,201.8 964.5,200.0 970.5,203.6 976.5,205.9 982.5,205.9 988.5,205.3 994.5,207.1 1000.5,206.5 1006.5,201.8 1012.5,203.0 1018.5,201.2 1024.5,196.5 1030.5,198.9 1036.5,198.3 1042.5,198.3 1048.5,198.9 1054.5,198.9 1060.5,199.5 1066.5,199.5 1072.5,200.6 1078.5,211.8 1084.5,205.3 1090.5,206.7 1096.5,219.4 1101.0,210.0" fill="none" stroke="#008000" stroke-width="3" stroke-linejoin="round" shape-rendering="geometricPrecision"/>
<polyline points="0.0,48.0 4.5,48.0 10.5,49.2 16.5,53.9 22.5,56.6 28.5,59.2 34.5,62.4 40.5,66.3 46.5,69.9 52.5,72.7 58.5,75.8 64.5,79.2 70.5,80.8 76.5,80.0 82.5,79.8 88.5,79.1 94.5,78.0 100.5,74.5 106.5,71.4 112.5,70.0 118.5,68.1 124.5,67.3 130.5,66.4 136.5,65.1 142.5,65.3 148.5,66.2 154.5,66.2 160.5,67.9 166.5,71.4 172.5,74.1 178.5,76.2 184.5,78.1 190.5,79.8 196.5,81.4 202.5,84.3 208.5,87.0 214.5,91.0 220.5,94.8 226.5,96.4 232.5,97.0 238.5,98.4 244.5,99.3 250.5,101.0 256.5,101.9 262.5,102.1 268.5,103.3 274.5,103.5 280.5,103.9 286.5,103.1 292.5,104.1 298.5,104.4 304.5,104.3 310.5,104.9 316.5,105.5 322.5,104.4 328.5,102.0 334.5,100.3 340.5,98.5 346.5,98.5 352.5,97.8 358.5,98.5 364.5,98.5 370.5,98.8 376.5,99.0 382.5,100.8 388.5,104.3 394.5,107.3 400.5,109.9 406.5,112.2 412.5,113.7 418.5,115.5 424.5,117.2 430.5,117.5 436.5,119.3 442.5,121.2 448.5,122.2 454.5,123.5 460.5,124.2 466.5,126.5 472.5,129.8 478.5,131.8 484.5,134.4 490.5,137.3 496.5,139.7 502.5,141.6 508.5,143.6 514.5,145.2 520.5,146.2 526.5,145.2 532.5,144.4 538.5,143.4 544.5,142.5 550.5,142.1 556.5,141.6 562.5,139.6 568.5,137.2 574.5,135.7 580.5,135.4 586.5,136.3 592.5,136.0 598.5,136.2 604.5,136.3 610.5,136.1 616.5,136.0 622.5,136.6 628.5,137.6 634.5,137.5 640.5,137.2 646.5,137.1 652.5,138.0 658.5,139.8 664.5,140.9 670.5,142.3 676.5,143.4 682.5,144.9 688.5,146.4 694.5,147.9 700.5,149.2 706.5,150.5 712.5,151.1 718.5,150.7 724.5,150.8 730.5,150.8 736.5,150.1 742.5,149.4 748.5,148.6 754.5,148.2 760.5,147.6 766.5,146.8 772.5,146.5 778.5,146.3 784.5,146.1 790.5,145.6 796.5,145.1 802.5,145.4 808.5,144.3 814.5,143.5 820.5,143.5 826.5,142.3 832.5,141.6 838.5,141.5 844.5,141.8 850.5,141.6 856.5,141.5 862.5,141.4 868.5,142.6 874.5,144.4 880.5,146.0 886.5,149.0 892.5,152.7 898.5,155.3 904.5,157.2 910.5,160.3 916.5,163.6 922.5,167.4 928.5,171.3 934.5,173.9 940.5,176.5 946.5,178.5 952.5,179.3 958.5,180.8 964.5,184.6 970.5,187.2 976.5,190.2 982.5,190.8 988.5,192.6 994.5,195.6 1000.5,198.9 1006.5,201.6 1012.5,204.7 1018.5,207.7 1024.5,208.2 1030.5,209.3 1036.5,210.2 1042.5,211.2 1048.5,210.5 1054.5,209.5 1060.5,207.5 1066.5,206.8 1072.5,205.1 1078.5,203.6 1084.5,202.4 1090.5,200.4 1096.5,199.5 1102.5,199.7" fill="none" stroke="#00ff00" stroke-width="1" />
<rect x="4" y="46.5" width="1" height="2.5" fill="#ff0000"/>
<rect x="3" y="46.5" width="3" height="2.5" fill="#ff0000"/>
<rect x="10" y="49.0" width="1" height="18.6" fill="#0000ff"/>
<rect x="9" y="60.0" width="3" height="1.0" fill="#0000ff"/>
<rect x="16" y="59.3" width="1" height="38.5" fill="#0000ff"/>
<rect x="15" y="59.3" width="3" height="35.4" fill="#0000ff"/>
<rect x="22" y="72.0" width="1" height="28.0" fill="#ff0000"/>
<rect x="21" y="75.4" width="3" height="17.6" fill="#ff0000"/>
<rect x="28" y="70.0" width="1" height="11.7" fill="#ff0000"/>
<rect x="27" y="75.0" width="3" height="2.0" fill="#ff0000"/>
<rect x="34" y="73.3" width="1" height="14.1" fill="#0000ff"/>
<rect x="33" y="73.3" width="3" height="6.7" fill="#0000ff"/>
<rect x="40" y="78.0" width="1" height="11.5" fill="#0000ff"/>
<rect x="39" y="78.5" width="3" height="9.5" fill="#0000ff"/>
<rect x="46" y="83.8" width="1" height="12.0" fill="#ff0000"/>
<rect x="45" y="83.8" width="3" height="4.7" fill="#ff0000"/>
<rect x="52" y="74.4" width="1" height="17.2" fill="#ff0000"/>
<rect x="51" y="75.4" width="3" height="9.4" fill="#ff0000"/>
<rect x="58" y="76.0" width="1" height="5.7" fill="#ff0000"/>
<rect x="57" y="78.0" width="3" height="1.0" fill="#ff0000"/>
<rect x="64" y="70.7" width="1" height="10.3" fill="#0000ff"/>
<rect x="63" y="76.0" width="3" height="5.0" fill="#0000ff"/>
<rect x="70" y="72.8" width="1" height="8.9" fill="#ff0000"/>
<rect x="69" y="77.0" width="3" height="1.0" fill="#ff0000"/>
<rect x="76" y="78.5" width="1" height="9.5" fill="#0000ff"/>
<rect x="75" y="78.5" width="3" height="8.4" fill="#0000ff"/>
<rect x="82" y="73.3" width="1" height="14.7" fill="#ff0000"/>
<rect x="81" y="73.3" width="3" height="13.1" fill="#ff0000"/>
<rect x="88" y="61.9" width="1" height="12.0" fill="#ff0000"/>
<rect x="87" y="67.6" width="3" height="6.3" fill="#ff0000"/>
<rect x="94" y="65.0" width="1" height="5.2" fill="#0000ff"/>
<rect x="93" y="68.0" width="3" height="1.0" fill="#0000ff"/>
<rect x="100" y="51.0" width="1" height="19.2" fill="#ff0000"/>
<rect x="99" y="53.5" width="3" height="16.7" fill="#ff0000"/>
<rect x="106" y="52.0" width="1" height="7.8" fill="#ff0000"/>
<rect x="105" y="52.0" width="3" height="3.6" fill="#ff0000"/>
<rect x="112" y="51.0" width="1" height="11.5" fill="#0000ff"/>
<rect x="111" y="53.0" width="3" height="8.4" fill="#0000ff"/>
<rect x="118" y="59.3" width="1" height="8.3" fill="#ff0000"/>
<rect x="117" y="59.3" width="3" height="4.1" fill="#ff0000"/>
<rect x="124" y="58.8" width="1" height="14.5" fill="#0000ff"/>
<rect x="123" y="59.8" width="3" height="13.5" fill="#0000ff"/>
<rect x="130" y="68.0" width="1" height="3.8" fill="#ff0000"/>
<rect x="129" y="68.0" width="3" height="3.8" fill="#ff0000"/>
<rect x="136" y="70.0" width="1" height="9.6" fill="#0000ff"/>
<rect x="135" y="70.0" width="3" height="4.0" fill="#0000ff"/>
<rect x="142" y="72.0" width="1" height="6.5" fill="#0000ff"/>
<rect x="141" y="72.0" width="3" height="3.0" fill="#0000ff"/>
<rect x="148" y="72.0" width="1" height="12.8" fill="#0000ff"/>
<rect x="147" y="72.0" width="3" height="5.0" fill="#0000ff"/>
<rect x="154" y="68.0" width="1" height="10.5" fill="#ff0000"/>
<rect x="153" y="68.0" width="3" height="9.0" fill="#ff0000"/>
<rect x="160" y="67.6" width="1" height="3.7" fill="#0000ff"/>
<rect x="159" y="67.6" width="3" height="3.7" fill="#0000ff"/>
<rect x="166" y="70.7" width="1" height="17.3" fill="#0000ff"/>
<rect x="165" y="70.7" width="3" height="15.7" fill="#0000ff"/>
<rect x="172" y="83.2" width="1" height="6.8" fill="#0000ff"/>
<rect x="171" y="85.8" width="3" height="2.6" fill="#0000ff"/>
<rect x="178" y="80.6" width="1" height="9.4" fill="#ff0000"/>
<rect x="177" y="80.6" width="3" height="7.4" fill="#ff0000"/>
<rect x="184" y="78.0" width="1" height="14.0" fill="#0000ff"/>
<rect x="183" y="80.6" width="3" height="11.4" fill="#0000ff"/>
<rect x="190" y="85.8" width="1" height="8.9" fill="#ff0000"/>
<rect x="189" y="85.8" width="3" height="5.8" fill="#ff0000"/>
<rect x="196" y="86.4" width="1" height="3.1" fill="#0000ff"/>
<rect x="195" y="86.4" width="3" height="3.1" fill="#0000ff"/>
<rect x="202" y="86.9" width="1" height="19.1" fill="#0000ff"/>
<rect x="201" y="86.9" width="3" height="17.1" fill="#0000ff"/>
<rect x="208" y="103.0" width="1" height="9.0" fill="#0000ff"/>
<rect x="207" y="103.0" width="3" height="1.0" fill="#0000ff"/>
<rect x="214" y="102.5" width="1" height="5.2" fill="#0000ff"/>
<rect x="213" y="102.5" width="3" height="5.2" fill="#0000ff"/>
<rect x="220" y="105.0" width="1" height="6.4" fill="#0000ff"/>
<rect x="219" y="106.7" width="3" height="3.1" fill="#0000ff"/>
<rect x="226" y="96.8" width="1" height="14.0" fill="#ff0000"/>
<rect x="225" y="102.0" width="3" height="7.3" fill="#ff0000"/>
<rect x="232" y="94.7" width="1" height="8.8" fill="#ff0000"/>
<rect x="231" y="94.7" width="3" height="6.8" fill="#ff0000"/>
<rect x="238" y="94.2" width="1" height="5.2" fill="#ff0000"/>
<rect x="237" y="94.2" width="3" height="5.2" fill="#ff0000"/>
<rect x="244" y="94.7" width="1" height="6.3" fill="#0000ff"/>
<rect x="243" y="96.2" width="3" height="4.8" fill="#0000ff"/>
<rect x="250" y="94.2" width="1" height="9.8" fill="#0000ff"/>
<rect x="249" y="98.3" width="3" height="4.7" fill="#0000ff"/>
<rect x="256" y="96.8" width="1" height="10.9" fill="#ff0000"/>
<rect x="255" y="98.9" width="3" height="5.7" fill="#ff0000"/>
<rect x="262" y="93.8" width="1" height="14.0" fill="#0000ff"/>
<rect x="261" y="99.0" width="3" height="7.0" fill="#0000ff"/>
<rect x="268" y="104.9" width="1" height="14.1" fill="#0000ff"/>
<rect x="267" y="104.9" width="3" height="10.5" fill="#0000ff"/>
<rect x="274" y="102.0" width="1" height="14.6" fill="#ff0000"/>
<rect x="273" y="109.6" width="3" height="7.0" fill="#ff0000"/>
<rect x="280" y="107.8" width="1" height="8.8" fill="#0000ff"/>
<rect x="279" y="109.6" width="3" height="4.7" fill="#0000ff"/>
<rect x="286" y="94.3" width="1" height="21.7" fill="#ff0000"/>
<rect x="285" y="94.3" width="3" height="19.4" fill="#ff0000"/>
<rect x="292" y="95.0" width="1" height="10.7" fill="#0000ff"/>
<rect x="291" y="95.0" width="3" height="9.3" fill="#0000ff"/>
<rect x="298" y="97.3" width="1" height="7.0" fill="#ff0000"/>
<rect x="297" y="97.3" width="3" height="5.2" fill="#ff0000"/>
<rect x="304" y="93.2" width="1" height="10.5" fill="#0000ff"/>
<rect x="303" y="97.3" width="3" height="2.9" fill="#0000ff"/>
<rect x="310" y="99.6" width="1" height="14.1" fill="#0000ff"/>
<rect x="309" y="99.6" width="3" height="8.8" fill="#0000ff"/>
<rect x="316" y="104.9" width="1" height="8.8" fill="#ff0000"/>
<rect x="315" y="104.9" width="3" height="4.1" fill="#ff0000"/>
<rect x="322" y="92.0" width="1" height="18.8" fill="#ff0000"/>
<rect x="321" y="94.9" width="3" height="12.9" fill="#ff0000"/>
<rect x="328" y="87.3" width="1" height="10.6" fill="#ff0000"/>
<rect x="327" y="91.4" width="3" height="4.6" fill="#ff0000"/>
<rect x="334" y="87.3" width="1" height="10.0" fill="#0000ff"/>
<rect x="333" y="92.0" width="3" height="1.2" fill="#0000ff"/>
<rect x="340" y="91.4" width="1" height="14.1" fill="#0000ff"/>
<rect x="339" y="91.4" width="3" height="4.6" fill="#0000ff"/>
<rect x="346" y="90.8" width="1" height="6.2" fill="#ff0000"/>
<rect x="345" y="94.3" width="3" height="2.7" fill="#ff0000"/>
<rect x="352" y="75.0" width="1" height="22.9" fill="#0000ff"/>
<rect x="351" y="92.0" width="3" height="5.9" fill="#0000ff"/>
<rect x="358" y="96.0" width="1" height="7.7" fill="#0000ff"/>
<rect x="357" y="97.9" width="3" height="5.8" fill="#0000ff"/>
<rect x="364" y="100.2" width="1" height="3.5" fill="#ff0000"/>
<rect x="363" y="100.2" width="3" height="3.5" fill="#ff0000"/>
<rect x="370" y="100.2" width="1" height="11.7" fill="#0000ff"/>
<rect x="369" y="100.2" width="3" height="11.7" fill="#0000ff"/>
<rect x="376" y="103.7" width="1" height="10.0" fill="#ff0000"/>
<rect x="375" y="106.0" width="3" height="5.9" fill="#ff0000"/>
<rect x="382" y="107.2" width="1" height="6.5" fill="#0000ff"/>
<rect x="381" y="107.2" width="3" height="6.5" fill="#0000ff"/>
<rect x="388" y="111.3" width="1" height="20.0" fill="#0000ff"/>
<rect x="387" y="111.3" width="3" height="15.3" fill="#0000ff"/>
<rect x="394" y="120.7" width="1" height="14.1" fill="#ff0000"/>
<rect x="393" y="122.5" width="3" height="6.4" fill="#ff0000"/>
<rect x="400" y="118.4" width="1" height="9.3" fill="#ff0000"/>
<rect x="399" y="121.9" width="3" height="2.9" fill="#ff0000"/>
<rect x="406" y="117.8" width="1" height="14.1" fill="#ff0000"/>
<rect x="405" y="117.8" width="3" height="5.8" fill="#ff0000"/>
<rect x="412" y="113.0" width="1" height="4.8" fill="#ff0000"/>
<rect x="411" y="113.0" width="3" height="4.8" fill="#ff0000"/>
<rect x="418" y="111.3" width="1" height="16.5" fill="#0000ff"/>
<rect x="417" y="114.9" width="3" height="7.0" fill="#0000ff"/>
<rect x="424" y="113.1" width="1" height="10.6" fill="#ff0000"/>
<rect x="423" y="117.2" width="3" height="3.6" fill="#ff0000"/>
<rect x="430" y="107.9" width="1" height="12.3" fill="#ff0000"/>
<rect x="429" y="114.9" width="3" height="5.3" fill="#ff0000"/>
<rect x="436" y="113.0" width="1" height="10.7" fill="#0000ff"/>
<rect x="435" y="114.3" width="3" height="9.4" fill="#0000ff"/>
<rect x="442" y="120.8" width="1" height="19.2" fill="#0000ff"/>
<rect x="441" y="122.5" width="3" height="10.5" fill="#0000ff"/>
<rect x="448" y="127.2" width="1" height="12.8" fill="#0000ff"/>
<rect x="447" y="134.2" width="3" height="1.8" fill="#0000ff"/>
<rect x="454" y="134.7" width="1" height="1.0" fill="#0000ff"/>
<rect x="453" y="134.7" width="3" height="1.0" fill="#0000ff"/>
<rect x="460" y="129.3" width="1" height="1.0" fill="#ff0000"/>
<rect x="459" y="129.3" width="3" height="1.0" fill="#ff0000"/>
<rect x="466" y="129.5" width="1" height="19.4" fill="#0000ff"/>
<rect x="465" y="131.3" width="3" height="9.4" fill="#0000ff"/>
<rect x="472" y="139.5" width="1" height="11.1" fill="#0000ff"/>
<rect x="471" y="139.5" width="3" height="6.5" fill="#0000ff"/>
<rect x="478" y="139.5" width="1" height="11.1" fill="#ff0000"/>
<rect x="477" y="141.3" width="3" height="6.4" fill="#ff0000"/>
<rect x="484" y="137.2" width="1" height="8.8" fill="#0000ff"/>
<rect x="483" y="142.4" width="3" height="1.2" fill="#0000ff"/>
<rect x="490" y="140.0" width="1" height="8.9" fill="#0000ff"/>
<rect x="489" y="143.0" width="3" height="1.0" fill="#0000ff"/>
<rect x="496" y="143.0" width="1" height="7.6" fill="#0000ff"/>
<rect x="495" y="143.0" width="3" height="4.7" fill="#0000ff"/>
<rect x="502" y="147.0" width="1" height="11.9" fill="#0000ff"/>
<rect x="501" y="147.0" width="3" height="4.8" fill="#0000ff"/>
<rect x="508" y="151.2" width="1" height="4.7" fill="#0000ff"/>
<rect x="507" y="151.2" width="3" height="4.7" fill="#0000ff"/>
<rect x="514" y="148.3" width="1" height="7.6" fill="#ff0000"/>
<rect x="513" y="151.2" width="3" height="4.7" fill="#ff0000"/>
<rect x="520" y="139.5" width="1" height="12.3" fill="#ff0000"/>
<rect x="519" y="139.5" width="3" height="12.3" fill="#ff0000"/>
<rect x="526" y="126.0" width="1" height="16.4" fill="#ff0000"/>
<rect x="525" y="131.3" width="3" height="8.7" fill="#ff0000"/>
<rect x="532" y="129.0" width="1" height="8.8" fill="#0000ff"/>
<rect x="531" y="131.3" width="3" height="6.4" fill="#0000ff"/>
<rect x="538" y="129.0" width="1" height="9.3" fill="#ff0000"/>
<rect x="537" y="131.3" width="3" height="5.9" fill="#ff0000"/>
<rect x="544" y="129.0" width="1" height="5.8" fill="#0000ff"/>
<rect x="543" y="131.3" width="3" height="3.5" fill="#0000ff"/>
<rect x="550" y="129.0" width="1" height="10.5" fill="#0000ff"/>
<rect x="549" y="131.9" width="3" height="7.6" fill="#0000ff"/>
<rect x="556" y="137.2" width="1" height="5.8" fill="#0000ff"/>
<rect x="555" y="137.2" width="3" height="5.8" fill="#0000ff"/>
<rect x="562" y="131.9" width="1" height="11.7" fill="#ff0000"/>
<rect x="561" y="131.9" width="3" height="10.5" fill="#ff0000"/>
<rect x="568" y="129.0" width="1" height="5.8" fill="#ff0000"/>
<rect x="567" y="131.3" width="3" height="3.5" fill="#ff0000"/>
<rect x="574" y="131.5" width="1" height="7.8" fill="#0000ff"/>
<rect x="573" y="131.5" width="3" height="5.0" fill="#0000ff"/>
<rect x="580" y="131.0" width="1" height="6.0" fill="#0000ff"/>
<rect x="579" y="133.0" width="3" height="4.0" fill="#0000ff"/>
<rect x="586" y="135.2" width="1" height="7.0" fill="#0000ff"/>
<rect x="585" y="135.2" width="3" height="5.2" fill="#0000ff"/>
<rect x="592" y="134.0" width="1" height="8.8" fill="#ff0000"/>
<rect x="591" y="134.0" width="3" height="7.0" fill="#ff0000"/>
<rect x="598" y="131.7" width="1" height="4.6" fill="#ff0000"/>
<rect x="597" y="133.4" width="3" height="2.9" fill="#ff0000"/>
<rect x="604" y="131.7" width="1" height="4.3" fill="#0000ff"/>
<rect x="603" y="134.0" width="3" height="2.0" fill="#0000ff"/>
<rect x="610" y="131.7" width="1" height="5.3" fill="#0000ff"/>
<rect x="609" y="134.0" width="3" height="3.0" fill="#0000ff"/>
<rect x="616" y="134.6" width="1" height="11.1" fill="#0000ff"/>
<rect x="615" y="134.6" width="3" height="8.2" fill="#0000ff"/>
<rect x="622" y="135.2" width="1" height="8.8" fill="#ff0000"/>
<rect x="621" y="137.5" width="3" height="5.3" fill="#ff0000"/>
<rect x="628" y="136.3" width="1" height="6.5" fill="#0000ff"/>
<rect x="627" y="138.0" width="3" height="3.0" fill="#0000ff"/>
<rect x="634" y="134.6" width="1" height="5.8" fill="#ff0000"/>
<rect x="633" y="136.3" width="3" height="4.1" fill="#ff0000"/>
<rect x="640" y="131.0" width="1" height="8.3" fill="#ff0000"/>
<rect x="639" y="133.4" width="3" height="5.9" fill="#ff0000"/>
<rect x="646" y="132.2" width="1" height="7.7" fill="#0000ff"/>
<rect x="645" y="132.2" width="3" height="7.7" fill="#0000ff"/>
<rect x="652" y="137.0" width="1" height="7.0" fill="#0000ff"/>
<rect x="651" y="138.1" width="3" height="4.7" fill="#0000ff"/>
<rect x="658" y="141.0" width="1" height="10.6" fill="#0000ff"/>
<rect x="657" y="141.0" width="3" height="10.6" fill="#0000ff"/>
<rect x="664" y="146.3" width="1" height="7.6" fill="#ff0000"/>
<rect x="663" y="146.3" width="3" height="5.3" fill="#ff0000"/>
<rect x="670" y="145.0" width="1" height="8.9" fill="#0000ff"/>
<rect x="669" y="146.3" width="3" height="4.7" fill="#0000ff"/>
<rect x="676" y="148.0" width="1" height="5.9" fill="#0000ff"/>
<rect x="675" y="148.0" width="3" height="5.9" fill="#0000ff"/>
<rect x="682" y="152.8" width="1" height="2.9" fill="#ff0000"/>
<rect x="681" y="152.8" width="3" height="2.9" fill="#ff0000"/>
<rect x="688" y="151.0" width="1" height="5.9" fill="#0000ff"/>
<rect x="687" y="154.5" width="3" height="1.5" fill="#0000ff"/>
<rect x="694" y="149.8" width="1" height="5.9" fill="#ff0000"/>
<rect x="693" y="151.0" width="3" height="2.9" fill="#ff0000"/>
<rect x="700" y="146.3" width="1" height="5.9" fill="#ff0000"/>
<rect x="699" y="146.3" width="3" height="5.9" fill="#ff0000"/>
<rect x="706" y="147.5" width="1" height="5.8" fill="#0000ff"/>
<rect x="705" y="148.6" width="3" height="4.7" fill="#0000ff"/>
<rect x="712" y="148.6" width="1" height="4.7" fill="#ff0000"/>
<rect x="711" y="148.6" width="3" height="4.7" fill="#ff0000"/>
<rect x="718" y="145.0" width="1" height="7.2" fill="#ff0000"/>
<rect x="717" y="148.0" width="3" height="4.2" fill="#ff0000"/>
<rect x="724" y="145.0" width="1" height="6.0" fill="#ff0000"/>
<rect x="723" y="146.9" width="3" height="4.1" fill="#ff0000"/>
<rect x="730" y="146.0" width="1" height="4.8" fill="#0000ff"/>
<rect x="729" y="146.0" width="3" height="4.8" fill="#0000ff"/>
<rect x="736" y="147.2" width="1" height="5.3" fill="#ff0000"/>
<rect x="735" y="147.2" width="3" height="5.3" fill="#ff0000"/>
<rect x="742" y="143.1" width="1" height="5.9" fill="#ff0000"/>
<rect x="741" y="145.5" width="3" height="3.5" fill="#ff0000"/>
<rect x="748" y="144.9" width="1" height="5.8" fill="#0000ff"/>
<rect x="747" y="144.9" width="3" height="3.5" fill="#0000ff"/>
<rect x="754" y="146.7" width="1" height="3.5" fill="#ff0000"/>
<rect x="753" y="146.7" width="3" height="3.5" fill="#ff0000"/>
<rect x="760" y="140.2" width="1" height="8.2" fill="#ff0000"/>
<rect x="759" y="140.2" width="3" height="8.2" fill="#ff0000"/>
<rect x="766" y="142.5" width="1" height="3.5" fill="#0000ff"/>
<rect x="765" y="142.5" width="3" height="3.5" fill="#0000ff"/>
<rect x="772" y="143.0" width="1" height="2.0" fill="#0000ff"/>
<rect x="771" y="143.0" width="3" height="2.0" fill="#0000ff"/>
<rect x="778" y="142.0" width="1" height="4.0" fill="#0000ff"/>
<rect x="777" y="144.0" width="3" height="2.0" fill="#0000ff"/>
<rect x="784" y="142.0" width="1" height="5.8" fill="#0000ff"/>
<rect x="783" y="144.0" width="3" height="1.2" fill="#0000ff"/>
<rect x="790" y="142.5" width="1" height="3.0" fill="#0000ff"/>
<rect x="789" y="144.0" width="3" height="1.5" fill="#0000ff"/>
<rect x="796" y="142.5" width="1" height="4.7" fill="#ff0000"/>
<rect x="795" y="142.5" width="3" height="4.7" fill="#ff0000"/>
<rect x="802" y="144.9" width="1" height="4.1" fill="#0000ff"/>
<rect x="801" y="144.9" width="3" height="4.1" fill="#0000ff"/>
<rect x="808" y="135.0" width="1" height="8.1" fill="#ff0000"/>
<rect x="807" y="137.3" width="3" height="5.8" fill="#ff0000"/>
<rect x="814" y="136.0" width="1" height="6.0" fill="#0000ff"/>
<rect x="813" y="137.3" width="3" height="1.2" fill="#0000ff"/>
<rect x="820" y="137.9" width="1" height="2.3" fill="#0000ff"/>
<rect x="819" y="137.9" width="3" height="2.3" fill="#0000ff"/>
<rect x="826" y="131.4" width="1" height="8.2" fill="#ff0000"/>
<rect x="825" y="134.3" width="3" height="5.3" fill="#ff0000"/>
<rect x="832" y="132.0" width="1" height="12.3" fill="#0000ff"/>
<rect x="831" y="133.8" width="3" height="4.2" fill="#0000ff"/>
<rect x="838" y="138.4" width="1" height="9.4" fill="#0000ff"/>
<rect x="837" y="138.4" width="3" height="6.5" fill="#0000ff"/>
<rect x="844" y="143.7" width="1" height="7.1" fill="#0000ff"/>
<rect x="843" y="143.7" width="3" height="4.1" fill="#0000ff"/>
<rect x="850" y="143.1" width="1" height="7.7" fill="#ff0000"/>
<rect x="849" y="143.1" width="3" height="4.7" fill="#ff0000"/>
<rect x="856" y="142.0" width="1" height="5.8" fill="#ff0000"/>
<rect x="855" y="142.0" width="3" height="2.0" fill="#ff0000"/>
<rect x="862" y="143.1" width="1" height="8.8" fill="#0000ff"/>
<rect x="861" y="143.1" width="3" height="4.7" fill="#0000ff"/>
<rect x="868" y="146.0" width="1" height="4.8" fill="#0000ff"/>
<rect x="867" y="146.0" width="3" height="3.0" fill="#0000ff"/>
<rect x="874" y="147.8" width="1" height="14.1" fill="#0000ff"/>
<rect x="873" y="147.8" width="3" height="8.8" fill="#0000ff"/>
<rect x="880" y="155.4" width="1" height="6.5" fill="#0000ff"/>
<rect x="879" y="155.4" width="3" height="1.2" fill="#0000ff"/>
<rect x="886" y="152.0" width="1" height="14.7" fill="#0000ff"/>
<rect x="885" y="156.1" width="3" height="8.2" fill="#0000ff"/>
<rect x="892" y="160.0" width="1" height="25.4" fill="#0000ff"/>
<rect x="891" y="166.0" width="3" height="8.9" fill="#0000ff"/>
<rect x="898" y="166.0" width="1" height="11.8" fill="#ff0000"/>
<rect x="897" y="171.3" width="3" height="3.6" fill="#ff0000"/>
<rect x="904" y="166.0" width="1" height="6.0" fill="#ff0000"/>
<rect x="903" y="166.0" width="3" height="3.6" fill="#ff0000"/>
<rect x="910" y="166.0" width="1" height="8.9" fill="#0000ff"/>
<rect x="909" y="166.0" width="3" height="8.9" fill="#0000ff"/>
<rect x="916" y="169.0" width="1" height="8.8" fill="#0000ff"/>
<rect x="915" y="172.5" width="3" height="1.8" fill="#0000ff"/>
<rect x="922" y="171.3" width="1" height="16.4" fill="#0000ff"/>
<rect x="921" y="174.3" width="3" height="11.7" fill="#0000ff"/>
<rect x="928" y="177.2" width="1" height="11.8" fill="#0000ff"/>
<rect x="927" y="183.0" width="3" height="4.8" fill="#0000ff"/>
<rect x="934" y="182.5" width="1" height="8.2" fill="#ff0000"/>
<rect x="933" y="182.5" width="3" height="5.2" fill="#ff0000"/>
<rect x="940" y="177.2" width="1" height="6.5" fill="#0000ff"/>
<rect x="939" y="181.3" width="3" height="1.7" fill="#0000ff"/>
<rect x="946" y="180.0" width="1" height="9.0" fill="#0000ff"/>
<rect x="945" y="182.5" width="3" height="1.5" fill="#0000ff"/>
<rect x="952" y="180.0" width="1" height="7.8" fill="#0000ff"/>
<rect x="951" y="182.0" width="3" height="1.7" fill="#0000ff"/>
<rect x="958" y="182.5" width="1" height="8.2" fill="#0000ff"/>
<rect x="957" y="183.7" width="3" height="2.3" fill="#0000ff"/>
<rect x="964" y="184.8" width="1" height="18.8" fill="#0000ff"/>
<rect x="963" y="184.8" width="3" height="18.8" fill="#0000ff"/>
<rect x="970" y="195.4" width="1" height="11.1" fill="#ff0000"/>
<rect x="969" y="201.2" width="3" height="3.0" fill="#ff0000"/>
<rect x="976" y="199.5" width="1" height="7.0" fill="#0000ff"/>
<rect x="975" y="201.2" width="3" height="3.0" fill="#0000ff"/>
<rect x="982" y="188.3" width="1" height="15.9" fill="#ff0000"/>
<rect x="981" y="192.4" width="3" height="11.8" fill="#ff0000"/>
<rect x="988" y="191.3" width="1" height="18.1" fill="#0000ff"/>
<rect x="987" y="193.0" width="3" height="12.3" fill="#0000ff"/>
<rect x="994" y="204.2" width="1" height="8.2" fill="#0000ff"/>
<rect x="993" y="204.2" width="3" height="8.2" fill="#0000ff"/>
<rect x="1000" y="211.8" width="1" height="5.9" fill="#0000ff"/>
<rect x="999" y="211.8" width="3" height="4.1" fill="#0000ff"/>
<rect x="1006" y="209.4" width="1" height="10.0" fill="#ff0000"/>
<rect x="1005" y="211.2" width="3" height="4.7" fill="#ff0000"/>
<rect x="1012" y="209.4" width="1" height="6.5" fill="#0000ff"/>
<rect x="1011" y="211.2" width="3" height="3.5" fill="#0000ff"/>
<rect x="1018" y="212.4" width="1" height="8.2" fill="#0000ff"/>
<rect x="1017" y="214.1" width="3" height="1.8" fill="#0000ff"/>
<rect x="1024" y="206.0" width="1" height="11.0" fill="#ff0000"/>
<rect x="1023" y="208.3" width="3" height="8.7" fill="#ff0000"/>
<rect x="1030" y="205.6" width="1" height="6.8" fill="#0000ff"/>
<rect x="1029" y="208.0" width="3" height="4.4" fill="#0000ff"/>
<rect x="1036" y="209.4" width="1" height="5.3" fill="#0000ff"/>
<rect x="1035" y="211.5" width="3" height="1.5" fill="#0000ff"/>
<rect x="1042" y="200.0" width="1" height="12.4" fill="#ff0000"/>
<rect x="1041" y="203.0" width="3" height="9.4" fill="#ff0000"/>
<rect x="1048" y="196.0" width="1" height="8.2" fill="#ff0000"/>
<rect x="1047" y="198.3" width="3" height="5.9" fill="#ff0000"/>
<rect x="1054" y="195.4" width="1" height="8.8" fill="#0000ff"/>
<rect x="1053" y="197.7" width="3" height="4.7" fill="#0000ff"/>
<rect x="1060" y="192.4" width="1" height="10.0" fill="#ff0000"/>
<rect x="1059" y="196.0" width="3" height="6.4" fill="#ff0000"/>
<rect x="1066" y="196.0" width="1" height="7.6" fill="#0000ff"/>
<rect x="1065" y="196.0" width="3" height="7.6" fill="#0000ff"/>
<rect x="1072" y="198.3" width="1" height="4.1" fill="#ff0000"/>
<rect x="1071" y="198.3" width="3" height="4.1" fill="#ff0000"/>
<rect x="1078" y="195.4" width="1" height="5.2" fill="#0000ff"/>
<rect x="1077" y="197.0" width="3" height="3.6" fill="#0000ff"/>
<rect x="1084" y="194.8" width="1" height="4.7" fill="#ff0000"/>
<rect x="1083" y="196.0" width="3" height="3.5" fill="#ff0000"/>
<rect x="1090" y="191.3" width="1" height="12.3" fill="#ff0000"/>
<rect x="1089" y="193.0" width="3" height="7.0" fill="#ff0000"/>
<rect x="1096" y="193.0" width="1" height="11.2" fill="#0000ff"/>
<rect x="1095" y="193.0" width="3" height="11.2" fill="#0000ff"/>
<text x="1 13" y="29.5" font-size="12" font-family="Liberation Sans, IPAGothic, sans-serif" fill="#000" stroke="#000" stroke-width="0.35">日経</text>
<text transform="scale(0.8,1)" text-anchor="middle" x="36.25 43.75 51.25" y="29.0" font-size="12.5" font-family="Liberation Sans, IPAGothic, sans-serif" fill="#000" stroke="#000" stroke-width="0.3">225</text>
<text transform="scale(0.8,1)" text-anchor="middle" x="58.75 66.25 73.75 81.25" y="29.0" font-size="12.5" font-family="Liberation Mono, IPAGothic, monospace" fill="#000" stroke="#000" stroke-width="0.12">mini</text>
<text transform="scale(0.8,1)" text-anchor="middle" x="96.25 103.75 111.25 118.75 126.25 133.75" y="29.0" font-size="12.5" font-family="Liberation Sans, IPAGothic, sans-serif" fill="#000" stroke="#000" stroke-width="0.3">13/09(</text>
<text transform="scale(0.8,1)" text-anchor="middle" x="148.75" y="29.0" font-size="12.5" font-family="Liberation Sans, IPAGothic, sans-serif" fill="#000" stroke="#000" stroke-width="0.3">5</text>
<text x="121" y="29.5" font-size="12" font-family="Liberation Sans, IPAGothic, sans-serif" fill="#000" stroke="#000" stroke-width="0.35">分</text>
<text transform="scale(0.8,1)" text-anchor="middle" x="171.25" y="29.0" font-size="12.5" font-family="Liberation Sans, IPAGothic, sans-serif" fill="#000" stroke="#000" stroke-width="0.3">,</text>
<text transform="scale(0.8,1)" text-anchor="middle" x="186.25 193.75 201.25 208.75 216.25 223.75 231.25 238.75 246.25 253.75" y="29.0" font-size="12.5" font-family="Liberation Sans, IPAGothic, sans-serif" fill="#000" stroke="#000" stroke-width="0.3">2013/07/25</text>
<text transform="scale(0.8,1)" text-anchor="middle" x="268.75" y="29.0" font-size="12.5" font-family="Liberation Sans, IPAGothic, sans-serif" fill="#000" stroke="#000" stroke-width="0.3">-</text>
<text transform="scale(0.8,1)" text-anchor="middle" x="283.75 291.25 298.75 306.25 313.75 321.25 328.75 336.25 343.75 351.25" y="29.0" font-size="12.5" font-family="Liberation Sans, IPAGothic, sans-serif" fill="#000" stroke="#000" stroke-width="0.3">2013/07/29</text>
<text transform="scale(0.8,1)" text-anchor="middle" x="366.25" y="29.0" font-size="12.5" font-family="Liberation Sans, IPAGothic, sans-serif" fill="#000" stroke="#000" stroke-width="0.3">)</text>
<text x="313 325 337 349" y="29.5" font-size="12" font-family="Liberation Sans, IPAGothic, sans-serif" fill="#000" stroke="#000" stroke-width="0.35">移動平均</text>
<text transform="scale(0.8,1)" text-anchor="middle" x="456.25" y="29.0" font-size="12.5" font-family="Liberation Sans, IPAGothic, sans-serif" fill="#000" stroke="#000" stroke-width="0.3">(</text>
<text transform="scale(0.8,1)" text-anchor="middle" x="471.25 478.75 486.25 493.75 501.25" y="29.0" font-size="12.5" font-family="Liberation Mono, IPAGothic, monospace" fill="#000" stroke="#000" stroke-width="0.12">Close</text>
<text transform="scale(0.8,1)" text-anchor="middle" x="508.75" y="29.0" font-size="12.5" font-family="Liberation Sans, IPAGothic, sans-serif" fill="#000" stroke="#000" stroke-width="0.3">,</text>
<text transform="scale(0.8,1)" text-anchor="middle" x="523.75 531.25" y="29.0" font-size="12.5" font-family="Liberation Sans, IPAGothic, sans-serif" fill="#000" stroke="#000" stroke-width="0.3">10</text>
<text transform="scale(0.8,1)" text-anchor="middle" x="546.25" y="29.0" font-size="12.5" font-family="Liberation Sans, IPAGothic, sans-serif" fill="#000" stroke="#000" stroke-width="0.3">)</text>
<text x="457 469 481 493 505" y="29.5" font-size="12" font-family="Liberation Sans, IPAGothic, sans-serif" fill="#000" stroke="#000" stroke-width="0.35">一目均衡表</text>
<text transform="scale(0.8,1)" text-anchor="middle" x="651.25" y="29.0" font-size="12.5" font-family="Liberation Sans, IPAGothic, sans-serif" fill="#000" stroke="#000" stroke-width="0.3">(</text>
<text transform="scale(0.8,1)" text-anchor="middle" x="666.25 673.75" y="29.0" font-size="12.5" font-family="Liberation Sans, IPAGothic, sans-serif" fill="#000" stroke="#000" stroke-width="0.3">9,</text>
<text transform="scale(0.8,1)" text-anchor="middle" x="688.75 696.25 703.75" y="29.0" font-size="12.5" font-family="Liberation Sans, IPAGothic, sans-serif" fill="#000" stroke="#000" stroke-width="0.3">26,</text>
<text transform="scale(0.8,1)" text-anchor="middle" x="718.75 726.25" y="29.0" font-size="12.5" font-family="Liberation Sans, IPAGothic, sans-serif" fill="#000" stroke="#000" stroke-width="0.3">52</text>
<text transform="scale(0.8,1)" text-anchor="middle" x="741.25" y="29.0" font-size="12.5" font-family="Liberation Sans, IPAGothic, sans-serif" fill="#000" stroke="#000" stroke-width="0.3">)</text>
<text x="613 625 637 649" y="29.5" font-size="12" font-family="Liberation Sans, IPAGothic, sans-serif" fill="#000" stroke="#000" stroke-width="0.35">移動平均</text>
<text transform="scale(0.8,1)" text-anchor="middle" x="831.25" y="29.0" font-size="12.5" font-family="Liberation Sans, IPAGothic, sans-serif" fill="#000" stroke="#000" stroke-width="0.3">(</text>
<text transform="scale(0.8,1)" text-anchor="middle" x="846.25 853.75 861.25 868.75 876.25" y="29.0" font-size="12.5" font-family="Liberation Mono, IPAGothic, monospace" fill="#000" stroke="#000" stroke-width="0.12">Close</text>
<text transform="scale(0.8,1)" text-anchor="middle" x="883.75" y="29.0" font-size="12.5" font-family="Liberation Sans, IPAGothic, sans-serif" fill="#000" stroke="#000" stroke-width="0.3">,</text>
<text transform="scale(0.8,1)" text-anchor="middle" x="898.75 906.25" y="29.0" font-size="12.5" font-family="Liberation Sans, IPAGothic, sans-serif" fill="#000" stroke="#000" stroke-width="0.3">25</text>
<text transform="scale(0.8,1)" text-anchor="middle" x="921.25" y="29.0" font-size="12.5" font-family="Liberation Sans, IPAGothic, sans-serif" fill="#000" stroke="#000" stroke-width="0.3">)</text>
<text x="757 769 781 793" y="29.5" font-size="12" font-family="Liberation Sans, IPAGothic, sans-serif" fill="#000" stroke="#000" stroke-width="0.35">移動平均</text>
<text transform="scale(0.8,1)" text-anchor="middle" x="1011.25" y="29.0" font-size="12.5" font-family="Liberation Sans, IPAGothic, sans-serif" fill="#000" stroke="#000" stroke-width="0.3">(</text>
<text transform="scale(0.8,1)" text-anchor="middle" x="1026.25 1033.75 1041.25 1048.75 1056.25" y="29.0" font-size="12.5" font-family="Liberation Mono, IPAGothic, monospace" fill="#000" stroke="#000" stroke-width="0.12">Close</text>
<text transform="scale(0.8,1)" text-anchor="middle" x="1063.75" y="29.0" font-size="12.5" font-family="Liberation Sans, IPAGothic, sans-serif" fill="#000" stroke="#000" stroke-width="0.3">,</text>
<text transform="scale(0.8,1)" text-anchor="middle" x="1078.75 1086.25 1093.75" y="29.0" font-size="12.5" font-family="Liberation Sans, IPAGothic, sans-serif" fill="#000" stroke="#000" stroke-width="0.3">150</text>
<text transform="scale(0.8,1)" text-anchor="middle" x="1108.75" y="29.0" font-size="12.5" font-family="Liberation Sans, IPAGothic, sans-serif" fill="#000" stroke="#000" stroke-width="0.3">)</text>
<text x="907 919 931 943" y="29.5" font-size="12" font-family="Liberation Sans, IPAGothic, sans-serif" fill="#000" stroke="#000" stroke-width="0.35">移動平均</text>
<text transform="scale(0.8,1)" text-anchor="middle" x="1198.75" y="29.0" font-size="12.5" font-family="Liberation Sans, IPAGothic, sans-serif" fill="#000" stroke="#000" stroke-width="0.3">(</text>
<text transform="scale(0.8,1)" text-anchor="middle" x="1213.75 1221.25 1228.75 1236.25 1243.75" y="29.0" font-size="12.5" font-family="Liberation Mono, IPAGothic, monospace" fill="#000" stroke="#000" stroke-width="0.12">Close</text>
<text transform="scale(0.8,1)" text-anchor="middle" x="1251.25" y="29.0" font-size="12.5" font-family="Liberation Sans, IPAGothic, sans-serif" fill="#000" stroke="#000" stroke-width="0.3">,</text>
<text transform="scale(0.8,1)" text-anchor="middle" x="1266.25 1273.75" y="29.0" font-size="12.5" font-family="Liberation Sans, IPAGothic, sans-serif" fill="#000" stroke="#000" stroke-width="0.3">75</text>
<text transform="scale(0.8,1)" text-anchor="middle" x="1288.75" y="29.0" font-size="12.5" font-family="Liberation Sans, IPAGothic, sans-serif" fill="#000" stroke="#000" stroke-width="0.3">)</text>
<text x="1 13 25 37" y="43.5" font-size="12" font-family="Liberation Sans, IPAGothic, sans-serif" fill="#000" stroke="#000" stroke-width="0.35">移動平均</text>
<text transform="scale(0.8,1)" text-anchor="middle" x="66.25" y="43.0" font-size="12.5" font-family="Liberation Sans, IPAGothic, sans-serif" fill="#000" stroke="#000" stroke-width="0.3">(</text>
<text transform="scale(0.8,1)" text-anchor="middle" x="81.25 88.75 96.25 103.75 111.25" y="43.0" font-size="12.5" font-family="Liberation Mono, IPAGothic, monospace" fill="#000" stroke="#000" stroke-width="0.12">Close</text>
<text transform="scale(0.8,1)" text-anchor="middle" x="118.75" y="43.0" font-size="12.5" font-family="Liberation Sans, IPAGothic, sans-serif" fill="#000" stroke="#000" stroke-width="0.3">,</text>
<text transform="scale(0.8,1)" text-anchor="middle" x="133.75 141.25" y="43.0" font-size="12.5" font-family="Liberation Sans, IPAGothic, sans-serif" fill="#000" stroke="#000" stroke-width="0.3">75</text>
<text transform="scale(0.8,1)" text-anchor="middle" x="156.25" y="43.0" font-size="12.5" font-family="Liberation Sans, IPAGothic, sans-serif" fill="#000" stroke="#000" stroke-width="0.3">)</text>
<text x="145 157 169 181" y="43.5" font-size="12" font-family="Liberation Sans, IPAGothic, sans-serif" fill="#000" stroke="#000" stroke-width="0.35">移動平均</text>
<text transform="scale(0.8,1)" text-anchor="middle" x="246.25" y="43.0" font-size="12.5" font-family="Liberation Sans, IPAGothic, sans-serif" fill="#000" stroke="#000" stroke-width="0.3">(</text>
<text transform="scale(0.8,1)" text-anchor="middle" x="261.25 268.75 276.25 283.75 291.25" y="43.0" font-size="12.5" font-family="Liberation Mono, IPAGothic, monospace" fill="#000" stroke="#000" stroke-width="0.12">Close</text>
<text transform="scale(0.8,1)" text-anchor="middle" x="298.75" y="43.0" font-size="12.5" font-family="Liberation Sans, IPAGothic, sans-serif" fill="#000" stroke="#000" stroke-width="0.3">,</text>
<text transform="scale(0.8,1)" text-anchor="middle" x="313.75 321.25" y="43.0" font-size="12.5" font-family="Liberation Sans, IPAGothic, sans-serif" fill="#000" stroke="#000" stroke-width="0.3">20</text>
<text transform="scale(0.8,1)" text-anchor="middle" x="336.25" y="43.0" font-size="12.5" font-family="Liberation Sans, IPAGothic, sans-serif" fill="#000" stroke="#000" stroke-width="0.3">)</text>
<text x="289 301 313 325" y="43.5" font-size="12" font-family="Liberation Sans, IPAGothic, sans-serif" fill="#000" stroke="#000" stroke-width="0.35">移動平均</text>
<text transform="scale(0.8,1)" text-anchor="middle" x="426.25" y="43.0" font-size="12.5" font-family="Liberation Sans, IPAGothic, sans-serif" fill="#000" stroke="#000" stroke-width="0.3">(</text>
<text transform="scale(0.8,1)" text-anchor="middle" x="441.25 448.75 456.25 463.75 471.25" y="43.0" font-size="12.5" font-family="Liberation Mono, IPAGothic, monospace" fill="#000" stroke="#000" stroke-width="0.12">Close</text>
<text transform="scale(0.8,1)" text-anchor="middle" x="478.75" y="43.0" font-size="12.5" font-family="Liberation Sans, IPAGothic, sans-serif" fill="#000" stroke="#000" stroke-width="0.3">,</text>
<text transform="scale(0.8,1)" text-anchor="middle" x="493.75" y="43.0" font-size="12.5" font-family="Liberation Sans, IPAGothic, sans-serif" fill="#000" stroke="#000" stroke-width="0.3">5</text>
<text transform="scale(0.8,1)" text-anchor="middle" x="508.75" y="43.0" font-size="12.5" font-family="Liberation Sans, IPAGothic, sans-serif" fill="#000" stroke="#000" stroke-width="0.3">)</text>
<text x="427 439 451 463" y="43.5" font-size="12" font-family="Liberation Sans, IPAGothic, sans-serif" fill="#000" stroke="#000" stroke-width="0.35">移動平均</text>
<text transform="scale(0.8,1)" text-anchor="middle" x="598.75" y="43.0" font-size="12.5" font-family="Liberation Sans, IPAGothic, sans-serif" fill="#000" stroke="#000" stroke-width="0.3">(</text>
<text transform="scale(0.8,1)" text-anchor="middle" x="613.75 621.25 628.75 636.25 643.75" y="43.0" font-size="12.5" font-family="Liberation Mono, IPAGothic, monospace" fill="#000" stroke="#000" stroke-width="0.12">Close</text>
<text transform="scale(0.8,1)" text-anchor="middle" x="651.25" y="43.0" font-size="12.5" font-family="Liberation Sans, IPAGothic, sans-serif" fill="#000" stroke="#000" stroke-width="0.3">,</text>
<text transform="scale(0.8,1)" text-anchor="middle" x="666.25 673.75" y="43.0" font-size="12.5" font-family="Liberation Sans, IPAGothic, sans-serif" fill="#000" stroke="#000" stroke-width="0.3">40</text>
<text transform="scale(0.8,1)" text-anchor="middle" x="688.75" y="43.0" font-size="12.5" font-family="Liberation Sans, IPAGothic, sans-serif" fill="#000" stroke="#000" stroke-width="0.3">)</text>
<rect x="3" y="331" width="3" height="1" fill="#008a00"/>
<rect x="9" y="289" width="3" height="43" fill="#008a00"/>
<rect x="15" y="266" width="3" height="66" fill="#008a00"/>
<rect x="21" y="285" width="3" height="47" fill="#008a00"/>
<rect x="27" y="316" width="3" height="16" fill="#008a00"/>
<rect x="33" y="316" width="3" height="16" fill="#008a00"/>
<rect x="39" y="314" width="3" height="18" fill="#008a00"/>
<rect x="45" y="305" width="3" height="27" fill="#008a00"/>
<rect x="51" y="315" width="3" height="17" fill="#008a00"/>
<rect x="57" y="322" width="3" height="10" fill="#008a00"/>
<rect x="63" y="311" width="3" height="21" fill="#008a00"/>
<rect x="69" y="323" width="3" height="9" fill="#008a00"/>
<rect x="75" y="313" width="3" height="19" fill="#008a00"/>
<rect x="81" y="320" width="3" height="12" fill="#008a00"/>
<rect x="87" y="315" width="3" height="17" fill="#008a00"/>
<rect x="93" y="325" width="3" height="7" fill="#008a00"/>
<rect x="99" y="315" width="3" height="17" fill="#008a00"/>
<rect x="105" y="320" width="3" height="12" fill="#008a00"/>
<rect x="111" y="322" width="3" height="10" fill="#008a00"/>
<rect x="117" y="321" width="3" height="11" fill="#008a00"/>
<rect x="123" y="322" width="3" height="10" fill="#008a00"/>
<rect x="129" y="328" width="3" height="4" fill="#008a00"/>
<rect x="135" y="321" width="3" height="11" fill="#008a00"/>
<rect x="141" y="326" width="3" height="6" fill="#008a00"/>
<rect x="147" y="314" width="3" height="18" fill="#008a00"/>
<rect x="153" y="322" width="3" height="10" fill="#008a00"/>
<rect x="159" y="327" width="3" height="5" fill="#008a00"/>
<rect x="165" y="321" width="3" height="11" fill="#008a00"/>
<rect x="171" y="320" width="3" height="12" fill="#008a00"/>
<rect x="177" y="324" width="3" height="8" fill="#008a00"/>
<rect x="183" y="319" width="3" height="13" fill="#008a00"/>
<rect x="189" y="323" width="3" height="9" fill="#008a00"/>
<rect x="195" y="329" width="3" height="3" fill="#008a00"/>
<rect x="201" y="313" width="3" height="19" fill="#008a00"/>
<rect x="207" y="308" width="3" height="24" fill="#008a00"/>
<rect x="213" y="326" width="3" height="6" fill="#008a00"/>
<rect x="219" y="325" width="3" height="7" fill="#008a00"/>
<rect x="225" y="326" width="3" height="6" fill="#008a00"/>
<rect x="231" y="327" width="3" height="5" fill="#008a00"/>
<rect x="237" y="327" width="3" height="5" fill="#008a00"/>
<rect x="243" y="329" width="3" height="3" fill="#008a00"/>
<rect x="249" y="324" width="3" height="8" fill="#008a00"/>
<rect x="255" y="322" width="3" height="10" fill="#008a00"/>
<rect x="261" y="311" width="3" height="21" fill="#008a00"/>
<rect x="267" y="305" width="3" height="27" fill="#008a00"/>
<rect x="273" y="316" width="3" height="16" fill="#008a00"/>
<rect x="279" y="319" width="3" height="13" fill="#008a00"/>
<rect x="285" y="313" width="3" height="19" fill="#008a00"/>
<rect x="291" y="319" width="3" height="13" fill="#008a00"/>
<rect x="297" y="325" width="3" height="7" fill="#008a00"/>
<rect x="303" y="322" width="3" height="10" fill="#008a00"/>
<rect x="309" y="317" width="3" height="15" fill="#008a00"/>
<rect x="315" y="324" width="3" height="8" fill="#008a00"/>
<rect x="321" y="307" width="3" height="25" fill="#008a00"/>
<rect x="327" y="319" width="3" height="13" fill="#008a00"/>
<rect x="333" y="321" width="3" height="11" fill="#008a00"/>
<rect x="339" y="320" width="3" height="12" fill="#008a00"/>
<rect x="345" y="327" width="3" height="5" fill="#008a00"/>
<rect x="351" y="312" width="3" height="20" fill="#008a00"/>
<rect x="357" y="325" width="3" height="7" fill="#008a00"/>
<rect x="363" y="329" width="3" height="3" fill="#008a00"/>
<rect x="369" y="324" width="3" height="8" fill="#008a00"/>
<rect x="375" y="316" width="3" height="16" fill="#008a00"/>
<rect x="381" y="327" width="3" height="5" fill="#008a00"/>
<rect x="387" y="294" width="3" height="38" fill="#008a00"/>
<rect x="393" y="300" width="3" height="32" fill="#008a00"/>
<rect x="399" y="311" width="3" height="21" fill="#008a00"/>
<rect x="405" y="315" width="3" height="17" fill="#008a00"/>
<rect x="411" y="322" width="3" height="10" fill="#008a00"/>
<rect x="417" y="313" width="3" height="19" fill="#008a00"/>
<rect x="423" y="323" width="3" height="9" fill="#008a00"/>
<rect x="429" y="316" width="3" height="16" fill="#008a00"/>
<rect x="435" y="316" width="3" height="16" fill="#008a00"/>
<rect x="441" y="304" width="3" height="28" fill="#008a00"/>
<rect x="447" y="317" width="3" height="15" fill="#008a00"/>
<rect x="459" y="323" width="3" height="9" fill="#008a00"/>
<rect x="465" y="316" width="3" height="16" fill="#008a00"/>
<rect x="471" y="323" width="3" height="9" fill="#008a00"/>
<rect x="477" y="327" width="3" height="5" fill="#008a00"/>
<rect x="483" y="325" width="3" height="7" fill="#008a00"/>
<rect x="489" y="324" width="3" height="8" fill="#008a00"/>
<rect x="495" y="327" width="3" height="5" fill="#008a00"/>
<rect x="501" y="319" width="3" height="13" fill="#008a00"/>
<rect x="507" y="327" width="3" height="5" fill="#008a00"/>
<rect x="513" y="325" width="3" height="7" fill="#008a00"/>
<rect x="519" y="324" width="3" height="8" fill="#008a00"/>
<rect x="525" y="317" width="3" height="15" fill="#008a00"/>
<rect x="531" y="328" width="3" height="4" fill="#008a00"/>
<rect x="537" y="326" width="3" height="6" fill="#008a00"/>
<rect x="543" y="329" width="3" height="3" fill="#008a00"/>
<rect x="549" y="329" width="3" height="3" fill="#008a00"/>
<rect x="555" y="326" width="3" height="6" fill="#008a00"/>
<rect x="561" y="327" width="3" height="5" fill="#008a00"/>
<rect x="567" y="328" width="3" height="4" fill="#008a00"/>
<rect x="573" y="329" width="3" height="3" fill="#008a00"/>
<rect x="579" y="330" width="3" height="2" fill="#008a00"/>
<rect x="585" y="330" width="3" height="2" fill="#008a00"/>
<rect x="591" y="329" width="3" height="3" fill="#008a00"/>
<rect x="597" y="329" width="3" height="3" fill="#008a00"/>
<rect x="603" y="331" width="3" height="1" fill="#008a00"/>
<rect x="609" y="329" width="3" height="3" fill="#008a00"/>
<rect x="615" y="327" width="3" height="5" fill="#008a00"/>
<rect x="621" y="329" width="3" height="3" fill="#008a00"/>
<rect x="627" y="330" width="3" height="2" fill="#008a00"/>
<rect x="633" y="331" width="3" height="1" fill="#008a00"/>
<rect x="639" y="330" width="3" height="2" fill="#008a00"/>
<rect x="645" y="330" width="3" height="2" fill="#008a00"/>
<rect x="651" y="331" width="3" height="1" fill="#008a00"/>
<rect x="657" y="328" width="3" height="4" fill="#008a00"/>
<rect x="663" y="330" width="3" height="2" fill="#008a00"/>
<rect x="669" y="330" width="3" height="2" fill="#008a00"/>
<rect x="675" y="330" width="3" height="2" fill="#008a00"/>
<rect x="681" y="329" width="3" height="3" fill="#008a00"/>
<rect x="687" y="329" width="3" height="3" fill="#008a00"/>
<rect x="693" y="329" width="3" height="3" fill="#008a00"/>
<rect x="699" y="330" width="3" height="2" fill="#008a00"/>
<rect x="705" y="331" width="3" height="1" fill="#008a00"/>
<rect x="711" y="331" width="3" height="1" fill="#008a00"/>
<rect x="717" y="330" width="3" height="2" fill="#008a00"/>
<rect x="723" y="331" width="3" height="1" fill="#008a00"/>
<rect x="729" y="331" width="3" height="1" fill="#008a00"/>
<rect x="735" y="331" width="3" height="1" fill="#008a00"/>
<rect x="741" y="330" width="3" height="2" fill="#008a00"/>
<rect x="747" y="328" width="3" height="4" fill="#008a00"/>
<rect x="753" y="331" width="3" height="1" fill="#008a00"/>
<rect x="759" y="327" width="3" height="5" fill="#008a00"/>
<rect x="765" y="331" width="3" height="1" fill="#008a00"/>
<rect x="771" y="331" width="3" height="1" fill="#008a00"/>
<rect x="777" y="331" width="3" height="1" fill="#008a00"/>
<rect x="783" y="330" width="3" height="2" fill="#008a00"/>
<rect x="789" y="331" width="3" height="1" fill="#008a00"/>
<rect x="795" y="331" width="3" height="1" fill="#008a00"/>
<rect x="801" y="331" width="3" height="1" fill="#008a00"/>
<rect x="807" y="328" width="3" height="4" fill="#008a00"/>
<rect x="813" y="331" width="3" height="1" fill="#008a00"/>
<rect x="819" y="331" width="3" height="1" fill="#008a00"/>
<rect x="825" y="330" width="3" height="2" fill="#008a00"/>
<rect x="831" y="330" width="3" height="2" fill="#008a00"/>
<rect x="837" y="328" width="3" height="4" fill="#008a00"/>
<rect x="843" y="328" width="3" height="4" fill="#008a00"/>
<rect x="849" y="329" width="3" height="3" fill="#008a00"/>
<rect x="855" y="330" width="3" height="2" fill="#008a00"/>
<rect x="861" y="327" width="3" height="5" fill="#008a00"/>
<rect x="867" y="330" width="3" height="2" fill="#008a00"/>
<rect x="873" y="325" width="3" height="7" fill="#008a00"/>
<rect x="879" y="325" width="3" height="7" fill="#008a00"/>
<rect x="885" y="325" width="3" height="7" fill="#008a00"/>
<rect x="891" y="307" width="3" height="25" fill="#008a00"/>
<rect x="897" y="324" width="3" height="8" fill="#008a00"/>
<rect x="903" y="326" width="3" height="6" fill="#008a00"/>
<rect x="909" y="328" width="3" height="4" fill="#008a00"/>
<rect x="915" y="323" width="3" height="9" fill="#008a00"/>
<rect x="921" y="322" width="3" height="10" fill="#008a00"/>
<rect x="927" y="321" width="3" height="11" fill="#008a00"/>
<rect x="933" y="321" width="3" height="11" fill="#008a00"/>
<rect x="939" y="325" width="3" height="7" fill="#008a00"/>
<rect x="945" y="324" width="3" height="8" fill="#008a00"/>
<rect x="951" y="328" width="3" height="4" fill="#008a00"/>
<rect x="957" y="323" width="3" height="9" fill="#008a00"/>
<rect x="963" y="318" width="3" height="14" fill="#008a00"/>
<rect x="969" y="313" width="3" height="19" fill="#008a00"/>
<rect x="975" y="325" width="3" height="7" fill="#008a00"/>
<rect x="981" y="325" width="3" height="7" fill="#008a00"/>
<rect x="987" y="321" width="3" height="11" fill="#008a00"/>
<rect x="993" y="323" width="3" height="9" fill="#008a00"/>
<rect x="999" y="322" width="3" height="10" fill="#008a00"/>
<rect x="1005" y="323" width="3" height="9" fill="#008a00"/>
<rect x="1011" y="328" width="3" height="4" fill="#008a00"/>
<rect x="1017" y="327" width="3" height="5" fill="#008a00"/>
<rect x="1023" y="324" width="3" height="8" fill="#008a00"/>
<rect x="1029" y="328" width="3" height="4" fill="#008a00"/>
<rect x="1035" y="328" width="3" height="4" fill="#008a00"/>
<rect x="1041" y="327" width="3" height="5" fill="#008a00"/>
<rect x="1047" y="326" width="3" height="6" fill="#008a00"/>
<rect x="1053" y="327" width="3" height="5" fill="#008a00"/>
<rect x="1059" y="328" width="3" height="4" fill="#008a00"/>
<rect x="1065" y="329" width="3" height="3" fill="#008a00"/>
<rect x="1071" y="330" width="3" height="2" fill="#008a00"/>
<rect x="1077" y="329" width="3" height="3" fill="#008a00"/>
<rect x="1083" y="331" width="3" height="1" fill="#008a00"/>
<rect x="1089" y="330" width="3" height="2" fill="#008a00"/>
<rect x="1095" y="329" width="3" height="3" fill="#008a00"/>
<rect x="0" y="332" width="1101" height="1" fill="#000"/>
<text x="1 13 25" y="261" font-size="12" font-family="Liberation Sans, IPAGothic, sans-serif" fill="#000" stroke="#000" stroke-width="0.35">出来高</text>
<rect x="0" y="375" width="1101" height="1" fill="#606060"/>
<rect x="4" y="375.0" width="1" height="1.0" fill="#ff0000"/>
<rect x="10" y="375.0" width="1" height="3.0" fill="#ff0000"/>
<rect x="16" y="375.0" width="1" height="12.0" fill="#ff0000"/>
<rect x="22" y="375.0" width="1" height="13.0" fill="#ff0000"/>
<rect x="28" y="375.0" width="1" height="13.0" fill="#ff0000"/>
<rect x="34" y="375.0" width="1" height="13.0" fill="#ff0000"/>
<rect x="40" y="375.0" width="1" height="14.0" fill="#ff0000"/>
<rect x="46" y="375.0" width="1" height="13.0" fill="#ff0000"/>
<rect x="52" y="375.0" width="1" height="10.0" fill="#ff0000"/>
<rect x="58" y="375.0" width="1" height="7.0" fill="#ff0000"/>
<rect x="64" y="375.0" width="1" height="6.0" fill="#ff0000"/>
<rect x="70" y="375.0" width="1" height="4.0" fill="#ff0000"/>
<rect x="76" y="375.0" width="1" height="4.0" fill="#ff0000"/>
<rect x="82" y="375.0" width="1" height="1.5" fill="#ff0000"/>
<rect x="88" y="374.0" width="1" height="2.0" fill="#ff0000"/>
<rect x="94" y="372.0" width="1" height="4.0" fill="#ff0000"/>
<rect x="100" y="368.0" width="1" height="8.0" fill="#ff0000"/>
<rect x="106" y="365.0" width="1" height="11.0" fill="#ff0000"/>
<rect x="112" y="365.0" width="1" height="11.0" fill="#ff0000"/>
<rect x="118" y="366.0" width="1" height="10.0" fill="#ff0000"/>
<rect x="124" y="369.0" width="1" height="7.0" fill="#ff0000"/>
<rect x="130" y="371.0" width="1" height="5.0" fill="#ff0000"/>
<rect x="136" y="373.0" width="1" height="3.0" fill="#ff0000"/>
<rect x="142" y="374.5" width="1" height="1.5" fill="#ff0000"/>
<rect x="166" y="375.0" width="1" height="3.0" fill="#ff0000"/>
<rect x="172" y="375.0" width="1" height="5.0" fill="#ff0000"/>
<rect x="178" y="375.0" width="1" height="4.0" fill="#ff0000"/>
<rect x="184" y="375.0" width="1" height="6.0" fill="#ff0000"/>
<rect x="190" y="375.0" width="1" height="6.0" fill="#ff0000"/>
<rect x="196" y="375.0" width="1" height="6.0" fill="#ff0000"/>
<rect x="202" y="375.0" width="1" height="8.0" fill="#ff0000"/>
<rect x="208" y="375.0" width="1" height="9.0" fill="#ff0000"/>
<rect x="214" y="375.0" width="1" height="10.0" fill="#ff0000"/>
<rect x="220" y="375.0" width="1" height="10.0" fill="#ff0000"/>
<rect x="226" y="375.0" width="1" height="8.0" fill="#ff0000"/>
<rect x="232" y="375.0" width="1" height="5.0" fill="#ff0000"/>
<rect x="238" y="375.0" width="1" height="2.5" fill="#ff0000"/>
<rect x="244" y="375.0" width="1" height="1.5" fill="#ff0000"/>
<rect x="250" y="375.0" width="1" height="1.5" fill="#ff0000"/>
<rect x="268" y="375.0" width="1" height="2.0" fill="#ff0000"/>
<rect x="274" y="375.0" width="1" height="2.0" fill="#ff0000"/>
<rect x="280" y="375.0" width="1" height="2.0" fill="#ff0000"/>
<rect x="286" y="373.5" width="1" height="2.5" fill="#ff0000"/>
<rect x="292" y="372.5" width="1" height="3.5" fill="#ff0000"/>
<rect x="298" y="370.6" width="1" height="5.4" fill="#ff0000"/>
<rect x="304" y="369.5" width="1" height="6.5" fill="#ff0000"/>
<rect x="310" y="370.6" width="1" height="5.4" fill="#ff0000"/>
<rect x="316" y="371.5" width="1" height="4.5" fill="#ff0000"/>
<rect x="322" y="369.5" width="1" height="6.5" fill="#ff0000"/>
<rect x="328" y="367.7" width="1" height="8.3" fill="#ff0000"/>
<rect x="334" y="366.6" width="1" height="9.4" fill="#ff0000"/>
<rect x="340" y="367.7" width="1" height="8.3" fill="#ff0000"/>
<rect x="346" y="367.7" width="1" height="8.3" fill="#ff0000"/>
<rect x="352" y="368.6" width="1" height="7.4" fill="#ff0000"/>
<rect x="358" y="371.5" width="1" height="4.5" fill="#ff0000"/>
<rect x="364" y="371.5" width="1" height="4.5" fill="#ff0000"/>
<rect x="382" y="375.0" width="1" height="2.5" fill="#ff0000"/>
<rect x="388" y="375.0" width="1" height="6.0" fill="#ff0000"/>
<rect x="394" y="375.0" width="1" height="7.4" fill="#ff0000"/>
<rect x="400" y="375.0" width="1" height="7.4" fill="#ff0000"/>
<rect x="406" y="375.0" width="1" height="6.0" fill="#ff0000"/>
<rect x="412" y="375.0" width="1" height="4.3" fill="#ff0000"/>
<rect x="418" y="375.0" width="1" height="4.3" fill="#ff0000"/>
<rect x="424" y="375.0" width="1" height="2.5" fill="#ff0000"/>
<rect x="430" y="375.0" width="1" height="1.5" fill="#ff0000"/>
<rect x="436" y="375.0" width="1" height="1.5" fill="#ff0000"/>
<rect x="442" y="375.0" width="1" height="3.4" fill="#ff0000"/>
<rect x="448" y="375.0" width="1" height="5.2" fill="#ff0000"/>
<rect x="454" y="375.0" width="1" height="6.0" fill="#ff0000"/>
<rect x="460" y="375.0" width="1" height="4.3" fill="#ff0000"/>
<rect x="466" y="375.0" width="1" height="5.2" fill="#ff0000"/>
<rect x="472" y="375.0" width="1" height="6.0" fill="#ff0000"/>
<rect x="478" y="375.0" width="1" height="6.0" fill="#ff0000"/>
<rect x="484" y="375.0" width="1" height="5.2" fill="#ff0000"/>
<rect x="490" y="375.0" width="1" height="4.3" fill="#ff0000"/>
<rect x="496" y="375.0" width="1" height="4.3" fill="#ff0000"/>
<rect x="502" y="375.0" width="1" height="4.3" fill="#ff0000"/>
<rect x="508" y="375.0" width="1" height="5.2" fill="#ff0000"/>
<rect x="514" y="375.0" width="1" height="4.3" fill="#ff0000"/>
<rect x="526" y="370.6" width="1" height="5.4" fill="#ff0000"/>
<rect x="532" y="369.5" width="1" height="6.5" fill="#ff0000"/>
<rect x="538" y="366.6" width="1" height="9.4" fill="#ff0000"/>
<rect x="544" y="365.5" width="1" height="10.5" fill="#ff0000"/>
<rect x="550" y="366.6" width="1" height="9.4" fill="#ff0000"/>
<rect x="556" y="368.6" width="1" height="7.4" fill="#ff0000"/>
<rect x="562" y="367.7" width="1" height="8.3" fill="#ff0000"/>
<rect x="568" y="366.6" width="1" height="9.4" fill="#ff0000"/>
<rect x="574" y="367.7" width="1" height="8.3" fill="#ff0000"/>
<rect x="580" y="368.6" width="1" height="7.4" fill="#ff0000"/>
<rect x="586" y="370.6" width="1" height="5.4" fill="#ff0000"/>
<rect x="592" y="370.6" width="1" height="5.4" fill="#ff0000"/>
<rect x="598" y="370.6" width="1" height="5.4" fill="#ff0000"/>
<rect x="604" y="370.6" width="1" height="5.4" fill="#ff0000"/>
<rect x="610" y="370.6" width="1" height="5.4" fill="#ff0000"/>
<rect x="616" y="372.5" width="1" height="3.5" fill="#ff0000"/>
<rect x="622" y="373.5" width="1" height="2.5" fill="#ff0000"/>
<rect x="628" y="373.5" width="1" height="2.5" fill="#ff0000"/>
<rect x="634" y="373.5" width="1" height="2.5" fill="#ff0000"/>
<rect x="640" y="373.5" width="1" height="2.5" fill="#ff0000"/>
<rect x="646" y="373.5" width="1" height="2.5" fill="#ff0000"/>
<rect x="652" y="374.5" width="1" height="1.5" fill="#ff0000"/>
<rect x="658" y="375.0" width="1" height="2.0" fill="#ff0000"/>
<rect x="664" y="375.0" width="1" height="3.2" fill="#ff0000"/>
<rect x="670" y="375.0" width="1" height="4.3" fill="#ff0000"/>
<rect x="676" y="375.0" width="1" height="4.3" fill="#ff0000"/>
<rect x="682" y="375.0" width="1" height="5.2" fill="#ff0000"/>
<rect x="688" y="375.0" width="1" height="5.2" fill="#ff0000"/>
<rect x="694" y="375.0" width="1" height="4.3" fill="#ff0000"/>
<rect x="700" y="375.0" width="1" height="2.0" fill="#ff0000"/>
<rect x="706" y="375.0" width="1" height="2.0" fill="#ff0000"/>
<rect x="712" y="375.0" width="1" height="1.5" fill="#ff0000"/>
<rect x="724" y="375.0" width="1" height="1.3" fill="#ff0000"/>
<rect x="730" y="373.7" width="1" height="2.3" fill="#ff0000"/>
<rect x="736" y="373.7" width="1" height="2.3" fill="#ff0000"/>
<rect x="742" y="372.5" width="1" height="3.5" fill="#ff0000"/>
<rect x="748" y="372.5" width="1" height="3.5" fill="#ff0000"/>
<rect x="754" y="372.5" width="1" height="3.5" fill="#ff0000"/>
<rect x="760" y="371.5" width="1" height="4.5" fill="#ff0000"/>
<rect x="766" y="370.6" width="1" height="5.4" fill="#ff0000"/>
<rect x="772" y="371.5" width="1" height="4.5" fill="#ff0000"/>
<rect x="778" y="371.5" width="1" height="4.5" fill="#ff0000"/>
<rect x="784" y="371.5" width="1" height="4.5" fill="#ff0000"/>
<rect x="790" y="372.5" width="1" height="3.5" fill="#ff0000"/>
<rect x="796" y="372.5" width="1" height="3.5" fill="#ff0000"/>
<rect x="802" y="372.5" width="1" height="3.5" fill="#ff0000"/>
<rect x="808" y="371.5" width="1" height="4.5" fill="#ff0000"/>
<rect x="814" y="370.6" width="1" height="5.4" fill="#ff0000"/>
<rect x="820" y="371.5" width="1" height="4.5" fill="#ff0000"/>
<rect x="826" y="370.6" width="1" height="5.4" fill="#ff0000"/>
<rect x="832" y="371.5" width="1" height="4.5" fill="#ff0000"/>
<rect x="838" y="373.7" width="1" height="2.3" fill="#ff0000"/>
<rect x="850" y="375.0" width="1" height="1.3" fill="#ff0000"/>
<rect x="856" y="375.0" width="1" height="1.3" fill="#ff0000"/>
<rect x="862" y="375.0" width="1" height="2.5" fill="#ff0000"/>
<rect x="868" y="375.0" width="1" height="3.4" fill="#ff0000"/>
<rect x="874" y="375.0" width="1" height="5.2" fill="#ff0000"/>
<rect x="880" y="375.0" width="1" height="6.0" fill="#ff0000"/>
<rect x="886" y="375.0" width="1" height="8.0" fill="#ff0000"/>
<rect x="892" y="375.0" width="1" height="10.7" fill="#ff0000"/>
<rect x="898" y="375.0" width="1" height="12.0" fill="#ff0000"/>
<rect x="904" y="375.0" width="1" height="10.7" fill="#ff0000"/>
<rect x="910" y="375.0" width="1" height="10.7" fill="#ff0000"/>
<rect x="916" y="375.0" width="1" height="9.8" fill="#ff0000"/>
<rect x="922" y="375.0" width="1" height="10.7" fill="#ff0000"/>
<rect x="928" y="375.0" width="1" height="12.0" fill="#ff0000"/>
<rect x="934" y="375.0" width="1" height="9.8" fill="#ff0000"/>
<rect x="940" y="375.0" width="1" height="8.0" fill="#ff0000"/>
<rect x="946" y="375.0" width="1" height="7.0" fill="#ff0000"/>
<rect x="952" y="375.0" width="1" height="5.2" fill="#ff0000"/>
<rect x="958" y="375.0" width="1" height="4.3" fill="#ff0000"/>
<rect x="964" y="375.0" width="1" height="7.0" fill="#ff0000"/>
<rect x="970" y="375.0" width="1" height="8.0" fill="#ff0000"/>
<rect x="976" y="375.0" width="1" height="8.0" fill="#ff0000"/>
<rect x="982" y="375.0" width="1" height="4.3" fill="#ff0000"/>
<rect x="988" y="375.0" width="1" height="5.2" fill="#ff0000"/>
<rect x="994" y="375.0" width="1" height="6.0" fill="#ff0000"/>
<rect x="1000" y="375.0" width="1" height="7.0" fill="#ff0000"/>
<rect x="1006" y="375.0" width="1" height="6.0" fill="#ff0000"/>
<rect x="1012" y="375.0" width="1" height="5.2" fill="#ff0000"/>
<rect x="1018" y="375.0" width="1" height="4.3" fill="#ff0000"/>
<rect x="1024" y="375.0" width="1" height="1.3" fill="#ff0000"/>
<rect x="1036" y="374.7" width="1" height="1.3" fill="#ff0000"/>
<rect x="1042" y="372.0" width="1" height="4.0" fill="#ff0000"/>
<rect x="1048" y="367.7" width="1" height="8.3" fill="#ff0000"/>
<rect x="1054" y="366.6" width="1" height="9.4" fill="#ff0000"/>
<rect x="1060" y="364.6" width="1" height="11.4" fill="#ff0000"/>
<rect x="1066" y="365.5" width="1" height="10.5" fill="#ff0000"/>
<rect x="1072" y="364.6" width="1" height="11.4" fill="#ff0000"/>
<rect x="1078" y="364.6" width="1" height="11.4" fill="#ff0000"/>
<rect x="1084" y="364.6" width="1" height="11.4" fill="#ff0000"/>
<rect x="1090" y="364.6" width="1" height="11.4" fill="#ff0000"/>
<rect x="1096" y="366.6" width="1" height="9.4" fill="#ff0000"/>
<polyline points="0.0,370.5 6.0,370.5 9.5,372.5 11.7,376.6 16.5,386.6 28.5,392.7 34.5,396.4 42.5,401.5 46.8,403.4 54.0,402.2 70.3,400.3 76.0,402.2 82.7,398.6 87.8,394.9 95.0,392.0 106.9,380.3 118.6,376.3 130.3,378.0 143.5,381.7 161.0,381.7 172.8,388.0 184.5,392.0 191.8,393.4 195.5,394.3 206.5,402.2 221.0,409.4 226.6,409.4 235.8,405.9 245.0,404.0 254.0,402.6 263.2,402.6 268.7,404.8 279.7,406.2 285.0,402.2 292.5,399.8 303.5,394.3 316.3,394.0 323.6,389.8 332.8,383.9 345.6,380.6 352.0,379.2 358.4,381.2 365.7,381.5 373.0,385.2 382.2,387.0 389.5,392.2 400.5,398.6 407.0,398.6 412.4,396.4 418.8,397.5 428.0,395.3 437.0,396.7 450.0,403.5 455.6,404.4 461.0,403.0 472.0,408.0 483.0,410.3 494.0,410.8 503.0,412.6 508.7,414.5 514.0,414.5 519.7,411.4 527.0,403.5 534.3,399.8 541.6,394.3 549.0,392.5 556.3,392.5 567.3,387.0 578.2,384.3 585.6,385.2 594.7,382.5 609.3,380.3 614.8,381.5 627.6,382.0 638.6,380.3 649.6,380.3 657.0,383.4 664.3,386.1 677.0,389.8 686.5,392.5 695.6,392.5 703.0,391.2 714.0,391.2 721.0,388.9 734.0,386.5 750.5,383.4 763.3,379.2 780.0,376.6 798.0,375.5 809.0,372.4 818.2,371.5 827.4,368.7 832.0,368.2 842.0,371.8 849.4,373.7 864.0,374.2 871.3,377.9 880.5,382.5 886.0,386.1 892.4,392.5 900.6,396.2 908.0,398.6 915.5,401.7 928.3,409.0 941.0,411.4 946.6,409.9 957.6,409.9 965.0,415.4 976.0,419.4 982.3,417.2 990.5,420.0 1000.6,424.5 1012.5,424.5 1018.0,425.5 1027.0,422.7 1036.3,420.0 1045.4,412.6 1058.2,404.0 1074.7,396.2 1089.4,388.5 1101.0,388.5" fill="none" stroke="#ffff00" stroke-width="1" />
<polyline points="0.0,369.5 7.3,369.5 11.7,370.6 22.0,375.4 34.5,382.7 46.5,389.0 55.6,393.4 64.4,395.6 76.0,397.4 82.7,398.3 95.0,396.4 101.0,394.2 112.7,388.3 124.5,384.7 133.0,382.5 168.4,382.5 178.6,385.4 190.0,387.6 208.3,393.4 226.6,400.8 232.0,402.6 245.0,403.5 279.7,404.0 292.5,403.0 299.8,400.8 318.0,397.5 336.4,391.6 351.0,387.0 362.0,384.3 378.5,384.3 391.3,387.6 406.0,392.5 415.0,392.5 422.4,394.3 439.0,394.3 448.3,397.5 463.0,399.3 483.0,405.3 499.5,407.7 512.4,409.9 521.5,409.9 528.8,408.4 539.8,404.8 550.8,399.8 558.0,398.6 576.4,392.5 594.7,387.6 613.0,384.3 622.0,383.4 631.0,383.4 638.6,382.0 658.8,382.0 668.0,383.9 675.0,385.2 681.0,386.1 697.5,389.4 712.0,390.3 719.4,390.3 734.0,388.3 750.5,387.0 768.8,384.3 781.6,380.3 798.0,378.4 814.6,376.0 825.6,374.2 832.9,372.8 858.5,372.8 862.0,373.7 871.3,373.7 880.5,377.0 889.6,379.7 898.8,384.3 908.0,387.6 924.6,395.3 935.6,400.8 946.6,404.4 957.6,406.2 974.0,411.7 990.5,414.5 1005.0,418.1 1016.0,421.3 1038.0,421.3 1045.4,419.4 1056.4,414.5 1071.0,408.0 1089.4,399.3 1101.0,396.2" fill="none" stroke="#0000ff" stroke-width="1" />
<text transform="scale(0.8,1)" text-anchor="middle" x="6.25 13.75 21.25 28.75" y="358.5" font-size="12.5" font-family="Liberation Mono, IPAGothic, monospace" fill="#000" stroke="#000" stroke-width="0.12">MACD</text>
<text transform="scale(0.8,1)" text-anchor="middle" x="36.25" y="358.5" font-size="12.5" font-family="Liberation Sans, IPAGothic, sans-serif" fill="#000" stroke="#000" stroke-width="0.3">(</text>
<text transform="scale(0.8,1)" text-anchor="middle" x="51.25 58.75 66.25" y="358.5" font-size="12.5" font-family="Liberation Sans, IPAGothic, sans-serif" fill="#000" stroke="#000" stroke-width="0.3">12,</text>
<text transform="scale(0.8,1)" text-anchor="middle" x="81.25 88.75 96.25" y="358.5" font-size="12.5" font-family="Liberation Sans, IPAGothic, sans-serif" fill="#000" stroke="#000" stroke-width="0.3">26,</text>
<text transform="scale(0.8,1)" text-anchor="middle" x="111.25" y="358.5" font-size="12.5" font-family="Liberation Sans, IPAGothic, sans-serif" fill="#000" stroke="#000" stroke-width="0.3">9</text>
<text transform="scale(0.8,1)" text-anchor="middle" x="126.25" y="358.5" font-size="12.5" font-family="Liberation Sans, IPAGothic, sans-serif" fill="#000" stroke="#000" stroke-width="0.3">)</text>
<rect x="0" y="472" width="1101" height="1" fill="#0000ff"/>
<rect x="0" y="515" width="1101" height="1" fill="#ff0000"/>
<polyline points="0.0,499.0 9.2,499.5 16.5,504.0 22.9,508.3 28.4,508.3 33.9,505.0 41.2,506.8 49.4,509.2 58.6,505.0 69.5,502.2 76.9,503.7 87.8,500.0 94.3,493.1 100.7,483.0 108.0,473.0 112.6,469.3 118.0,469.3 124.5,475.3 136.3,488.0 148.2,499.1 155.6,500.0 164.7,501.3 172.0,509.5 178.4,516.0 184.8,519.0 195.8,519.6 202.2,520.5 213.2,520.5 219.6,521.4 226.0,520.9 232.4,517.8 239.8,512.3 245.5,510.1 262.9,509.5 268.4,512.3 273.9,514.1 280.3,515.0 285.8,506.8 292.2,498.6 298.6,485.8 304.0,480.3 309.5,479.3 316.0,483.9 322.4,484.8 327.8,481.7 335.2,474.8 346.2,473.0 352.6,475.7 359.0,483.0 365.4,490.3 370.9,499.5 377.3,507.7 382.8,515.0 389.2,518.7 393.7,520.5 401.0,517.8 413.0,510.5 419.4,509.2 430.3,507.4 436.7,507.4 443.2,509.2 450.5,514.1 456.9,516.9 462.4,516.9 470.6,515.6 478.0,516.0 491.0,517.8 496.5,519.6 502.9,520.5 508.4,521.4 514.8,520.5 520.3,516.9 525.8,505.9 532.2,493.1 538.6,483.0 544.0,478.4 549.5,476.2 556.0,480.3 562.4,482.5 568.8,480.3 575.2,477.5 580.7,476.6 587.0,480.3 592.6,482.5 599.0,483.6 608.0,483.6 616.3,490.3 622.8,494.5 629.2,500.8 635.6,498.2 641.0,494.9 646.5,493.1 652.0,495.8 658.4,505.0 664.8,511.4 670.3,515.0 676.7,517.8 687.7,523.3 694.1,522.4 700.5,519.0 707.0,516.0 718.0,513.2 725.5,509.2 731.0,507.4 736.5,503.1 742.9,494.9 749.3,487.2 754.8,483.9 762.0,478.4 769.4,473.3 778.6,473.0 784.0,474.4 790.5,476.2 796.9,476.2 802.4,474.8 809.7,471.1 817.0,468.9 826.5,467.5 832.6,468.4 838.0,476.6 844.5,488.0 850.0,500.9 856.3,503.1 862.8,504.0 868.2,506.3 874.6,511.0 881.0,514.1 886.5,516.9 893.0,518.3 898.4,518.3 904.8,514.5 910.3,512.3 915.8,511.4 922.2,515.0 928.4,518.3 934.4,521.2 941.0,521.2 947.5,519.0 957.5,518.3 964.8,520.5 970.3,522.5 975.8,523.8 982.2,521.4 988.6,519.0 995.0,519.6 1000.5,522.4 1006.0,523.8 1013.3,522.4 1018.8,521.4 1025.2,518.7 1031.6,516.9 1037.0,515.0 1042.6,512.3 1049.0,503.1 1054.5,494.9 1060.9,488.0 1066.4,484.8 1072.8,481.2 1078.3,479.3 1084.7,474.4 1091.0,470.2 1096.6,472.0 1101.0,475.7" fill="none" stroke="#ff0000" stroke-width="1" />
<polyline points="0.0,498.6 4.6,494.9 11.0,503.1 16.5,514.7 28.4,503.1 33.9,504.0 41.2,510.1 46.7,510.1 58.6,502.2 69.5,501.3 76.9,507.2 87.8,494.9 94.3,485.8 100.7,472.0 106.1,466.5 111.6,470.2 119.0,472.0 124.5,480.6 136.3,493.1 148.2,504.0 154.6,498.6 160.1,497.3 166.5,511.4 172.0,519.0 178.4,517.8 184.8,522.0 190.3,519.0 195.8,519.6 202.2,523.3 207.7,520.5 213.2,521.4 219.6,523.3 226.0,518.7 232.4,511.9 238.0,508.3 243.7,509.5 251.0,509.2 256.5,507.7 262.9,512.3 268.4,516.9 273.9,514.1 280.3,516.0 285.8,489.4 293.0,488.0 298.6,478.4 304.0,475.7 309.5,485.8 316.0,490.9 322.4,478.4 329.7,473.9 335.2,473.0 346.2,473.9 353.5,482.1 358.0,492.2 364.5,494.5 370.0,508.6 376.3,512.3 382.8,521.4 388.2,522.4 393.7,519.0 401.0,515.6 413.0,506.3 419.4,509.5 424.8,508.1 430.3,505.5 436.7,507.4 442.2,511.4 448.6,517.8 454.1,520.2 460.5,514.5 467.0,515.6 472.4,518.3 478.0,517.2 483.7,518.3 491.0,518.3 496.5,521.4 502.9,521.4 508.4,523.3 514.8,521.4 520.3,508.6 525.8,488.5 533.0,484.8 538.6,477.5 544.0,473.3 550.5,480.3 556.9,487.2 562.4,480.3 568.8,474.4 574.3,477.5 580.7,478.4 587.0,486.1 592.6,482.5 598.0,481.7 604.5,486.1 610.0,484.3 616.3,498.9 622.8,500.4 628.2,501.3 634.6,496.7 640.7,488.5 646.5,494.9 652.0,503.1 658.4,516.9 664.8,512.3 670.3,515.0 676.7,522.0 682.2,523.3 687.7,524.2 694.1,520.5 700.5,513.2 707.0,516.0 712.4,513.2 718.0,510.5 724.6,505.5 731.0,505.5 736.5,496.7 742.9,481.7 748.4,483.6 753.9,484.3 760.3,471.5 764.0,471.5 770.3,473.3 778.6,474.4 784.0,475.7 790.5,480.3 796.9,474.4 802.4,471.1 807.8,468.4 814.3,467.5 820.7,470.2 826.5,464.3 833.5,472.0 838.0,491.2 844.5,505.5 850.0,504.0 856.3,501.3 862.8,506.8 869.2,512.3 874.6,515.0 880.1,516.0 886.5,520.9 893.0,517.8 898.4,514.1 904.8,510.5 910.3,512.3 916.7,512.3 922.5,520.0 928.4,523.3 934.0,520.4 940.3,519.6 945.8,518.3 955.8,518.3 965.0,524.5 970.2,523.0 975.8,524.5 982.2,515.0 987.7,517.8 994.0,524.2 999.6,525.6 1006.0,521.4 1018.8,521.4 1024.3,515.4 1037.0,515.0 1042.6,504.0 1049.0,491.6 1054.5,489.4 1060.9,483.0 1066.4,484.3 1072.8,476.6 1078.3,474.4 1084.7,468.9 1090.2,466.5 1095.7,477.5 1101.0,484.3" fill="none" stroke="#0000ff" stroke-width="1" />
<text x="1 13 25 37 49 61 73 85 97 109 121 133 145" y="457" font-size="12" font-family="Liberation Sans, IPAGothic, sans-serif" fill="#000" stroke="#000" stroke-width="0.35">スロー・ストキャスティクス</text>
<text transform="scale(0.8,1)" text-anchor="middle" x="201.25" y="456.5" font-size="12.5" font-family="Liberation Sans, IPAGothic, sans-serif" fill="#000" stroke="#000" stroke-width="0.3">(</text>
<text transform="scale(0.8,1)" text-anchor="middle" x="216.25 223.75 231.25" y="456.5" font-size="12.5" font-family="Liberation Sans, IPAGothic, sans-serif" fill="#000" stroke="#000" stroke-width="0.3">14,</text>
<text transform="scale(0.8,1)" text-anchor="middle" x="246.25 253.75" y="456.5" font-size="12.5" font-family="Liberation Sans, IPAGothic, sans-serif" fill="#000" stroke="#000" stroke-width="0.3">3,</text>
<text transform="scale(0.8,1)" text-anchor="middle" x="268.75 276.25 283.75" y="456.5" font-size="12.5" font-family="Liberation Sans, IPAGothic, sans-serif" fill="#000" stroke="#000" stroke-width="0.3">80,</text>
<text transform="scale(0.8,1)" text-anchor="middle" x="298.75 306.25" y="456.5" font-size="12.5" font-family="Liberation Sans, IPAGothic, sans-serif" fill="#000" stroke="#000" stroke-width="0.3">20</text>
<text transform="scale(0.8,1)" text-anchor="middle" x="321.25" y="456.5" font-size="12.5" font-family="Liberation Sans, IPAGothic, sans-serif" fill="#000" stroke="#000" stroke-width="0.3">)</text>
<rect x="1102" y="17" width="264" height="560" fill="#fff"/>
<rect x="1101" y="17.0" width="1" height="558.0" fill="#000"/>
<rect x="0" y="542" width="1163" height="1" fill="#000"/>
<rect x="34" y="542.0" width="1" height="5.0" fill="#000"/>
<rect x="130" y="542.0" width="1" height="5.0" fill="#000"/>
<rect x="226" y="542.0" width="1" height="5.0" fill="#000"/>
<rect x="322" y="542.0" width="1" height="5.0" fill="#000"/>
<rect x="418" y="542.0" width="1" height="5.0" fill="#000"/>
<rect x="526" y="542.0" width="1" height="5.0" fill="#000"/>
<rect x="622" y="542.0" width="1" height="5.0" fill="#000"/>
<rect x="718" y="542.0" width="1" height="5.0" fill="#000"/>
<rect x="814" y="542.0" width="1" height="5.0" fill="#000"/>
<rect x="910" y="542.0" width="1" height="5.0" fill="#000"/>
<rect x="1006" y="542.0" width="1" height="10.0" fill="#000"/>
<text transform="scale(0.8,1)" text-anchor="middle" x="46.25 53.75 61.25 68.75 76.25" y="562.5" font-size="12.5" font-family="Liberation Sans, IPAGothic, sans-serif" fill="#000" stroke="#000" stroke-width="0.3">09:20</text>
<text transform="scale(0.8,1)" text-anchor="middle" x="166.25 173.75 181.25 188.75 196.25" y="562.5" font-size="12.5" font-family="Liberation Sans, IPAGothic, sans-serif" fill="#000" stroke="#000" stroke-width="0.3">10:40</text>
<text transform="scale(0.8,1)" text-anchor="middle" x="286.25 293.75 301.25 308.75 316.25" y="562.5" font-size="12.5" font-family="Liberation Sans, IPAGothic, sans-serif" fill="#000" stroke="#000" stroke-width="0.3">12:00</text>
<text transform="scale(0.8,1)" text-anchor="middle" x="406.25 413.75 421.25 428.75 436.25" y="562.5" font-size="12.5" font-family="Liberation Sans, IPAGothic, sans-serif" fill="#000" stroke="#000" stroke-width="0.3">13:20</text>
<text transform="scale(0.8,1)" text-anchor="middle" x="526.25 533.75 541.25 548.75 556.25" y="562.5" font-size="12.5" font-family="Liberation Sans, IPAGothic, sans-serif" fill="#000" stroke="#000" stroke-width="0.3">14:40</text>
<text transform="scale(0.8,1)" text-anchor="middle" x="661.25 668.75 676.25 683.75 691.25" y="562.5" font-size="12.5" font-family="Liberation Sans, IPAGothic, sans-serif" fill="#000" stroke="#000" stroke-width="0.3">17:20</text>
<text transform="scale(0.8,1)" text-anchor="middle" x="781.25 788.75 796.25 803.75 811.25" y="562.5" font-size="12.5" font-family="Liberation Sans, IPAGothic, sans-serif" fill="#000" stroke="#000" stroke-width="0.3">18:40</text>
<text transform="scale(0.8,1)" text-anchor="middle" x="901.25 908.75 916.25 923.75 931.25" y="562.5" font-size="12.5" font-family="Liberation Sans, IPAGothic, sans-serif" fill="#000" stroke="#000" stroke-width="0.3">20:00</text>
<text transform="scale(0.8,1)" text-anchor="middle" x="1021.25 1028.75 1036.25 1043.75 1051.25" y="562.5" font-size="12.5" font-family="Liberation Sans, IPAGothic, sans-serif" fill="#000" stroke="#000" stroke-width="0.3">21:20</text>
<text transform="scale(0.8,1)" text-anchor="middle" x="1141.25 1148.75 1156.25 1163.75 1171.25" y="562.5" font-size="12.5" font-family="Liberation Sans, IPAGothic, sans-serif" fill="#000" stroke="#000" stroke-width="0.3">22:40</text>
<text transform="scale(0.8,1)" text-anchor="middle" x="1261.25 1268.75 1276.25 1283.75 1291.25" y="562.5" font-size="12.5" font-family="Liberation Sans, IPAGothic, sans-serif" fill="#000" stroke="#000" stroke-width="0.3">07/27</text>
<rect x="1102" y="35" width="5" height="1" fill="#000"/>
<text transform="scale(0.8,1)" text-anchor="middle" x="1390.00 1397.50 1405.00 1412.50 1420.00 1427.50" y="41.5" font-size="12.5" font-family="Liberation Sans, IPAGothic, sans-serif" fill="#000" stroke="#000" stroke-width="0.3">14,425</text>
<rect x="1102" y="83" width="5" height="1" fill="#000"/>
<text transform="scale(0.8,1)" text-anchor="middle" x="1390.00 1397.50 1405.00 1412.50 1420.00 1427.50" y="89.5" font-size="12.5" font-family="Liberation Sans, IPAGothic, sans-serif" fill="#000" stroke="#000" stroke-width="0.3">14,275</text>
<rect x="1102" y="131" width="5" height="1" fill="#000"/>
<text transform="scale(0.8,1)" text-anchor="middle" x="1390.00 1397.50 1405.00 1412.50 1420.00 1427.50" y="137.5" font-size="12.5" font-family="Liberation Sans, IPAGothic, sans-serif" fill="#000" stroke="#000" stroke-width="0.3">14,125</text>
<rect x="1102" y="179" width="5" height="1" fill="#000"/>
<text transform="scale(0.8,1)" text-anchor="middle" x="1390.00 1397.50 1405.00 1412.50 1420.00 1427.50" y="185.5" font-size="12.5" font-family="Liberation Sans, IPAGothic, sans-serif" fill="#000" stroke="#000" stroke-width="0.3">13,975</text>
<rect x="1102" y="227" width="5" height="1" fill="#000"/>
<text transform="scale(0.8,1)" text-anchor="middle" x="1390.00 1397.50 1405.00 1412.50 1420.00 1427.50" y="233.5" font-size="12.5" font-family="Liberation Sans, IPAGothic, sans-serif" fill="#000" stroke="#000" stroke-width="0.3">13,825</text>
<rect x="1102" y="266" width="5" height="1" fill="#000"/>
<text transform="scale(0.8,1)" text-anchor="middle" x="1390.00 1397.50 1405.00 1412.50 1420.00 1427.50" y="272.5" font-size="12.5" font-family="Liberation Sans, IPAGothic, sans-serif" fill="#000" stroke="#000" stroke-width="0.3">385.00</text>
<rect x="1102" y="303" width="5" height="1" fill="#000"/>
<text transform="scale(0.8,1)" text-anchor="middle" x="1390.00 1397.50 1405.00 1412.50 1420.00 1427.50" y="309.5" font-size="12.5" font-family="Liberation Sans, IPAGothic, sans-serif" fill="#000" stroke="#000" stroke-width="0.3">170.00</text>
<rect x="1102" y="364" width="5" height="1" fill="#000"/>
<text transform="scale(0.8,1)" text-anchor="middle" x="1390.00 1397.50 1405.00 1412.50 1420.00" y="370.5" font-size="12.5" font-family="Liberation Sans, IPAGothic, sans-serif" fill="#000" stroke="#000" stroke-width="0.3">10.50</text>
<rect x="1102" y="402" width="5" height="1" fill="#000"/>
<text transform="scale(0.8,1)" text-anchor="middle" x="1390.00 1397.50 1405.00 1412.50 1420.00 1427.50" y="408.5" font-size="12.5" font-family="Liberation Sans, IPAGothic, sans-serif" fill="#000" stroke="#000" stroke-width="0.3">-24.50</text>
<rect x="1102" y="462" width="5" height="1" fill="#000"/>
<text transform="scale(0.8,1)" text-anchor="middle" x="1390.00 1397.50 1405.00 1412.50 1420.00" y="468.5" font-size="12.5" font-family="Liberation Sans, IPAGothic, sans-serif" fill="#000" stroke="#000" stroke-width="0.3">95.00</text>
<rect x="1102" y="501" width="5" height="1" fill="#000"/>
<text transform="scale(0.8,1)" text-anchor="middle" x="1390.00 1397.50 1405.00 1412.50 1420.00" y="507.5" font-size="12.5" font-family="Liberation Sans, IPAGothic, sans-serif" fill="#000" stroke="#000" stroke-width="0.3">40.00</text>
<rect x="1104.5" y="329.5" width="39" height="14" fill="#fff" stroke="#000" stroke-width="1"/>
<text x="1111.7" y="340.7" text-anchor="middle" font-size="17" font-family="Liberation Sans, IPAGothic, sans-serif" fill="#000">×</text>
<text transform="scale(0.8,1)" text-anchor="middle" x="1408.75 1416.25 1423.75" y="340.5" font-size="12.5" font-family="Liberation Sans, IPAGothic, sans-serif" fill="#000" stroke="#000" stroke-width="0.3">100</text>
<rect x="1149" y="19" width="14" height="13" fill="#fff"/>
<rect x="1149" y="19" width="14" height="1" fill="#c8c8c8"/>
<rect x="1149" y="19.0" width="1" height="13.0" fill="#c8c8c8"/>
<rect x="1149" y="31" width="14" height="1" fill="#a0a0a0"/>
<polygon points="1151,23 1162,23 1156.5,29" fill="#808080" stroke="#303030" stroke-width="1" shape-rendering="auto"/>
<rect x="1149" y="250" width="14" height="13" fill="#fff"/>
<rect x="1149" y="250" width="14" height="1" fill="#c8c8c8"/>
<rect x="1149" y="250.0" width="1" height="13.0" fill="#c8c8c8"/>
<rect x="1149" y="262" width="14" height="1" fill="#a0a0a0"/>
<polygon points="1151,254 1162,254 1156.5,260" fill="#808080" stroke="#303030" stroke-width="1" shape-rendering="auto"/>
<rect x="1149" y="348" width="14" height="13" fill="#fff"/>
<rect x="1149" y="348" width="14" height="1" fill="#c8c8c8"/>
<rect x="1149" y="348.0" width="1" height="13.0" fill="#c8c8c8"/>
<rect x="1149" y="360" width="14" height="1" fill="#a0a0a0"/>
<polygon points="1151,352 1162,352 1156.5,358" fill="#808080" stroke="#303030" stroke-width="1" shape-rendering="auto"/>
<rect x="1149" y="446" width="14" height="13" fill="#fff"/>
<rect x="1149" y="446" width="14" height="1" fill="#c8c8c8"/>
<rect x="1149" y="446.0" width="1" height="13.0" fill="#c8c8c8"/>
<rect x="1149" y="458" width="14" height="1" fill="#a0a0a0"/>
<polygon points="1151,450 1162,450 1156.5,456" fill="#808080" stroke="#303030" stroke-width="1" shape-rendering="auto"/>
<rect x="0" y="574" width="13" height="1" fill="#dcdcdc"/>
<rect x="13" y="574" width="1" height="1" fill="#606060"/>
<line x1="14" y1="574.5" x2="369" y2="574.5" stroke="#e0e0e0" stroke-width="1" stroke-dasharray="1 1"/>
<rect x="369" y="574" width="297" height="1" fill="#e2e2e2"/>
<rect x="666" y="574" width="1" height="1" fill="#606060"/>
<line x1="667" y1="574.5" x2="823" y2="574.5" stroke="#e0e0e0" stroke-width="1" stroke-dasharray="1 1"/>
<rect x="823" y="574" width="17" height="1" fill="#dcdcdc"/>
<rect x="840" y="574" width="1" height="1" fill="#606060"/>
<rect x="841" y="574" width="120" height="1" fill="#ececec"/>
<rect x="961" y="574" width="202" height="1" fill="#a8a8a8"/>
<rect x="0" y="0" width="1163" height="17" fill="#d7dae0"/>
<rect x="0" y="15" width="1163" height="2" fill="#dcdfe4"/>
<rect x="-3" y="-2" width="16" height="14" fill="#e9e9ec" stroke="#9a9a9a" stroke-width="1"/>
<polygon points="1.5,3 8.5,3 5.0,7" fill="#000" shape-rendering="auto"/>
<rect x="18.5" y="-2" width="78" height="14.5" fill="#fff" stroke="#a8abb3" stroke-width="1"/>
<text x="21 33" y="8" font-size="12" font-family="Liberation Sans, IPAGothic, sans-serif" fill="#000" stroke="#000" stroke-width="0.35">先物</text>
<rect x="80" y="-2" width="16" height="14" fill="#e9e9ec" stroke="#9a9a9a" stroke-width="1"/>
<polygon points="84.5,3 91.5,3 88.0,7" fill="#000" shape-rendering="auto"/>
<rect x="98.5" y="-2" width="114" height="14.5" fill="#fff" stroke="#a8abb3" stroke-width="1"/>
<text x="101 113" y="8" font-size="12" font-family="Liberation Sans, IPAGothic, sans-serif" fill="#000" stroke="#000" stroke-width="0.35">日経</text>
<text transform="scale(0.8,1)" text-anchor="middle" x="161.25 168.75 176.25" y="7.0" font-size="12.5" font-family="Liberation Sans, IPAGothic, sans-serif" fill="#000" stroke="#000" stroke-width="0.3">225</text>
<text transform="scale(0.8,1)" text-anchor="middle" x="183.75 191.25 198.75 206.25" y="7.0" font-size="12.5" font-family="Liberation Mono, IPAGothic, monospace" fill="#000" stroke="#000" stroke-width="0.12">mini</text>
<rect x="196" y="-2" width="16" height="14" fill="#e9e9ec" stroke="#9a9a9a" stroke-width="1"/>
<polygon points="200.5,3 207.5,3 204.0,7" fill="#000" shape-rendering="auto"/>
<rect x="215.5" y="-2" width="86" height="14.5" fill="#fff" stroke="#a8abb3" stroke-width="1"/>
<text transform="scale(0.8,1)" text-anchor="middle" x="277.50 285.00 292.50 300.00 307.50" y="7.0" font-size="12.5" font-family="Liberation Sans, IPAGothic, sans-serif" fill="#000" stroke="#000" stroke-width="0.3">13/09</text>
<rect x="285" y="-2" width="16" height="14" fill="#e9e9ec" stroke="#9a9a9a" stroke-width="1"/>
<polygon points="289.5,3 296.5,3 293.0,7" fill="#000" shape-rendering="auto"/>
<rect x="308" y="-2" width="20" height="15" fill="#dde7f5"/>
<rect x="308" y="13" width="20" height="1" fill="#b5cbe9"/>
<text x="311" y="8" font-size="12" font-family="Liberation Sans, IPAGothic, sans-serif" fill="#000" stroke="#000" stroke-width="0.35">足</text>
<rect x="329" y="-2" width="37" height="14.5" fill="#d4d6dc" stroke="#c9ccd3" stroke-width="1"/>
<text transform="scale(0.8,1)" text-anchor="middle" x="436.25" y="7.0" font-size="12.5" font-family="Liberation Sans, IPAGothic, sans-serif" fill="#000" stroke="#000" stroke-width="0.3">1</text>
<polygon points="353,-2 366,-2 353,11" fill="#f4f4f4"/>
<polygon points="366,-2 366,11 353,11" fill="#c6c6c2"/>
<line x1="353.5" y1="11" x2="365.5" y2="-1" stroke="#404040" stroke-width="1.2" shape-rendering="auto"/>
<rect x="353" y="10" width="13" height="1" fill="#606060"/>
<rect x="365" y="-2.0" width="1" height="13.0" fill="#606060"/>
<polygon points="355,1 359,1 357,-2" fill="#000"/>
<rect x="370" y="-3" width="17" height="15" rx="1.5" fill="#e6e6e6" shape-rendering="auto"/>
<rect x="370" y="-3.0" width="1" height="14.0" fill="#f8f8f8"/>
<rect x="386" y="-3.0" width="1" height="15.0" fill="#6a6a6a"/>
<rect x="385" y="-3.0" width="1" height="14.0" fill="#a8a8a8"/>
<rect x="371" y="11" width="16" height="1" fill="#6a6a6a"/>
<text x="371" y="8" font-size="12" font-family="Liberation Sans, IPAGothic, sans-serif" fill="#000" stroke="#000" stroke-width="0.35">日</text>
<rect x="390" y="-3" width="17" height="15" rx="1.5" fill="#e6e6e6" shape-rendering="auto"/>
<rect x="390" y="-3.0" width="1" height="14.0" fill="#f8f8f8"/>
<rect x="406" y="-3.0" width="1" height="15.0" fill="#6a6a6a"/>
<rect x="405" y="-3.0" width="1" height="14.0" fill="#a8a8a8"/>
<rect x="391" y="11" width="16" height="1" fill="#6a6a6a"/>
<text x="391" y="8" font-size="12" font-family="Liberation Sans, IPAGothic, sans-serif" fill="#000" stroke="#000" stroke-width="0.35">週</text>
<rect x="410" y="-3" width="17" height="15" rx="1.5" fill="#e6e6e6" shape-rendering="auto"/>
<rect x="410" y="-3.0" width="1" height="14.0" fill="#f8f8f8"/>
<rect x="426" y="-3.0" width="1" height="15.0" fill="#6a6a6a"/>
<rect x="425" y="-3.0" width="1" height="14.0" fill="#a8a8a8"/>
<rect x="411" y="11" width="16" height="1" fill="#6a6a6a"/>
<text x="411" y="8" font-size="12" font-family="Liberation Sans, IPAGothic, sans-serif" fill="#000" stroke="#000" stroke-width="0.35">月</text>
<rect x="430" y="-3" width="17" height="15" rx="1.5" fill="#c2c2c4" shape-rendering="auto"/>
<rect x="430" y="-3.0" width="1" height="15.0" fill="#707070"/>
<rect x="446" y="-3.0" width="1" height="15.0" fill="#6a6a6a"/>
<rect x="445" y="-3.0" width="1" height="14.0" fill="#a8a8a8"/>
<rect x="431" y="11" width="16" height="1" fill="#6a6a6a"/>
<text x="431" y="8" font-size="12" font-family="Liberation Sans, IPAGothic, sans-serif" fill="#000" stroke="#000" stroke-width="0.35">分</text>
<rect x="450" y="-3" width="18" height="15" rx="1.5" fill="#e6e6e6" shape-rendering="auto"/>
<rect x="450" y="-3.0" width="1" height="14.0" fill="#f8f8f8"/>
<rect x="467" y="-3.0" width="1" height="15.0" fill="#6a6a6a"/>
<rect x="466" y="-3.0" width="1" height="14.0" fill="#a8a8a8"/>
<rect x="451" y="11" width="17" height="1" fill="#6a6a6a"/>
<text transform="scale(0.8,1)" text-anchor="middle" x="573.75" y="10.5" font-size="12.5" font-family="Liberation Mono, IPAGothic, monospace" fill="#000" stroke="#000" stroke-width="0.12">T</text>
<rect x="478" y="-2" width="20" height="15" fill="#dde7f5"/>
<rect x="478" y="13" width="20" height="1" fill="#b5cbe9"/>
<text x="481" y="8" font-size="12" font-family="Liberation Sans, IPAGothic, sans-serif" fill="#000" stroke="#000" stroke-width="0.35">分</text>
<rect x="498" y="-2" width="38" height="14.5" fill="#fff" stroke="#c9ccd3" stroke-width="1"/>
<text transform="scale(0.8,1)" text-anchor="middle" x="648.75" y="7.0" font-size="12.5" font-family="Liberation Sans, IPAGothic, sans-serif" fill="#000" stroke="#000" stroke-width="0.3">5</text>
<polygon points="523,-2 536,-2 523,11" fill="#f4f4f4"/>
<polygon points="536,-2 536,11 523,11" fill="#c6c6c2"/>
<line x1="523.5" y1="11" x2="535.5" y2="-1" stroke="#404040" stroke-width="1.2" shape-rendering="auto"/>
<rect x="523" y="10" width="13" height="1" fill="#606060"/>
<rect x="535" y="-2.0" width="1" height="13.0" fill="#606060"/>
<polygon points="525,1 529,1 527,-2" fill="#000"/>
<rect x="539" y="-2" width="29" height="15" fill="#dde7f5"/>
<rect x="539" y="13" width="29" height="1" fill="#b5cbe9"/>
<text x="540 552" y="8" font-size="12" font-family="Liberation Sans, IPAGothic, sans-serif" fill="#000" stroke="#000" stroke-width="0.35">本数</text>
<rect x="568" y="-2" width="48" height="14.5" fill="#fff" stroke="#c9ccd3" stroke-width="1"/>
<text transform="scale(0.8,1)" text-anchor="middle" x="733.75 741.25 748.75" y="7.0" font-size="12.5" font-family="Liberation Sans, IPAGothic, sans-serif" fill="#000" stroke="#000" stroke-width="0.3">500</text>
<polygon points="603,-2 616,-2 603,11" fill="#f4f4f4"/>
<polygon points="616,-2 616,11 603,11" fill="#c6c6c2"/>
<line x1="603.5" y1="11" x2="615.5" y2="-1" stroke="#404040" stroke-width="1.2" shape-rendering="auto"/>
<rect x="603" y="10" width="13" height="1" fill="#606060"/>
<rect x="615" y="-2.0" width="1" height="13.0" fill="#606060"/>
<polygon points="605,1 609,1 607,-2" fill="#000"/>
<rect x="620" y="-3" width="33" height="15" rx="1.5" fill="#e6e6e6" shape-rendering="auto"/>
<rect x="620" y="-3.0" width="1" height="14.0" fill="#f8f8f8"/>
<rect x="652" y="-3.0" width="1" height="15.0" fill="#6a6a6a"/>
<rect x="651" y="-3.0" width="1" height="14.0" fill="#a8a8a8"/>
<rect x="621" y="11" width="32" height="1" fill="#6a6a6a"/>
<text x="623 635" y="8" font-size="12" font-family="Liberation Sans, IPAGothic, sans-serif" fill="#000" stroke="#000" stroke-width="0.35">適用</text>
<rect x="675" y="-3" width="58" height="15" rx="1.5" fill="#e6e6e6" shape-rendering="auto"/>
<rect x="675" y="-3.0" width="1" height="14.0" fill="#f8f8f8"/>
<rect x="732" y="-3.0" width="1" height="15.0" fill="#6a6a6a"/>
<rect x="731" y="-3.0" width="1" height="14.0" fill="#a8a8a8"/>
<rect x="676" y="11" width="57" height="1" fill="#6a6a6a"/>
<text x="679 691 703 715" y="8" font-size="12" font-family="Liberation Sans, IPAGothic, sans-serif" fill="#000" stroke="#000" stroke-width="0.35">複数銘柄</text>
</svg>
</body></html>
